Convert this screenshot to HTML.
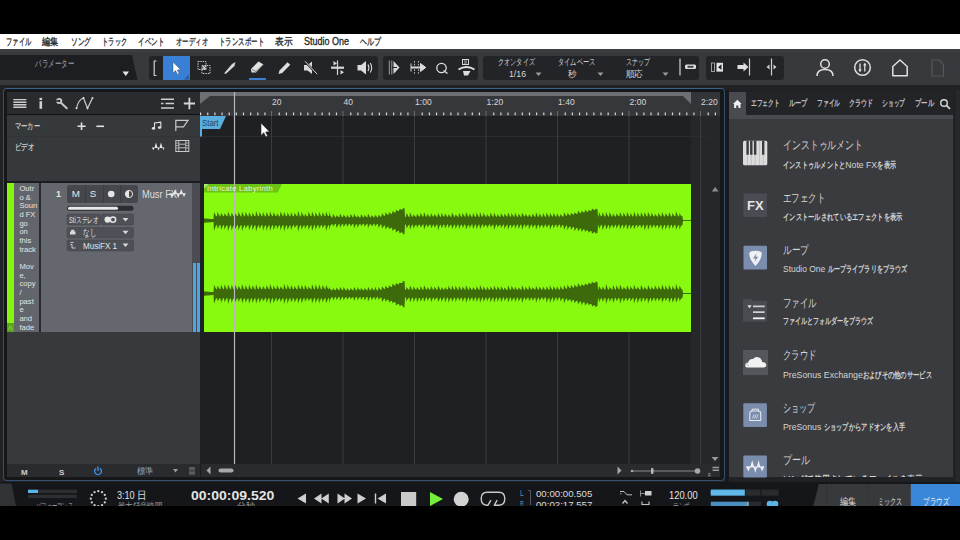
<!DOCTYPE html>
<html><head><meta charset="utf-8">
<style>
*{margin:0;padding:0;box-sizing:border-box}
html,body{width:960px;height:540px;overflow:hidden;background:#000}
body{position:relative;font-family:"Liberation Sans",sans-serif;color:#ccc}
.a{position:absolute}
.t{position:absolute;white-space:nowrap;line-height:1}
svg{position:absolute;overflow:visible}
.mn{font-size:10px;color:#262626;top:36.5px;-webkit-text-stroke:0.3px #262626}
.tb{background:#232428;border-radius:3px;top:56px;height:24px}
</style></head><body>
<!-- menu bar -->
<div class="a" style="left:0;top:34px;width:960px;height:15px;background:#fff"></div>
<div class="t mn"  style="transform:scaleX(0.625);transform-origin:0 0;left:6px">ファイル</div>
<div class="t mn"  style="transform:scaleX(0.825);transform-origin:0 0;left:42px">編集</div>
<div class="t mn"  style="transform:scaleX(0.667);transform-origin:0 0;left:71px">ソング</div>
<div class="t mn"  style="transform:scaleX(0.625);transform-origin:0 0;left:102px">トラック</div>
<div class="t mn"  style="transform:scaleX(0.650);transform-origin:0 0;left:138px">イベント</div>
<div class="t mn"  style="transform:scaleX(0.640);transform-origin:0 0;left:176px">オーディオ</div>
<div class="t mn"  style="transform:scaleX(0.643);transform-origin:0 0;left:219px">トランスポート</div>
<div class="t mn"  style="transform:scaleX(0.875);transform-origin:0 0;left:275px">表示</div>
<div class="t mn"  style="transform:scaleX(0.899);transform-origin:0 0;left:304px">Studio One</div>
<div class="t mn"  style="transform:scaleX(0.700);transform-origin:0 0;left:360px">ヘルプ</div>

<!-- toolbar -->
<div class="a" style="left:0;top:49px;width:960px;height:36px;background:#38393d"></div>
<div class="a" style="left:0;top:49px;width:960px;height:3px;background:#3d3e42"></div>
<!-- parameter box -->
<svg style="left:0;top:55px" width="140" height="26"><path d="M0,0 H132 L137.5,25 H0Z" fill="#1d1e22"/><path d="M122.5,16.5 H129 L125.75,21Z" fill="#e6e6e6"/></svg>
<div class="t"  style="transform:scaleX(0.650);transform-origin:0 0;left:35px;top:58.5px;font-size:9.5px;color:#a2a3a7">パラメーター</div>

<!-- tool group 1 -->
<div class="a tb" style="left:149px;width:228.5px"></div>
<div class="a" style="left:162.5px;top:56px;width:27px;height:24px;background:#3a7fd6"></div>
<svg style="left:0;top:0" width="960" height="90">
 <!-- [ -->
 <path d="M156.5,61 H154.2 V75.5 H156.5" fill="none" stroke="#cfcfcf" stroke-width="1.2"/>
 <!-- cursor -->
 <path d="M173,62 L173,73 L175.6,70.6 L177.6,74.4 L179.2,73.6 L177.3,69.9 L180.6,69.7Z" fill="#fff" stroke="#3a3a3a" stroke-width="0.4"/>
 <path d="M189,74.5 V79.5 H184Z" fill="#2a5da0"/>
 <!-- range tool -->
 <rect x="198" y="61.5" width="8" height="8" fill="none" stroke="#d0d0d0" stroke-width="1" stroke-dasharray="1.4 1"/>
 <rect x="202" y="65.5" width="8" height="8" fill="none" stroke="#d0d0d0" stroke-width="1" stroke-dasharray="1.4 1"/>
 <path d="M202.5,66 L206,69.5 M206,66 L202.5,69.5" stroke="#d0d0d0" stroke-width="1.2"/>
 <!-- knife/brush -->
 <path d="M224,73.5 L232,64 L235.5,62 L234.5,66 L226,73.8Z" fill="#d8d8d8"/>
 <!-- eraser -->
 <path d="M251,69 L258.5,61.5 L263.5,64.5 L256,72.5 L251.5,72.5Z" fill="#e2e2e2"/>
 <path d="M252,69.5 L256,71.5 L263,64.8" fill="none" stroke="#555" stroke-width="0.8"/>
 <rect x="249" y="78" width="17" height="2" fill="#3a7fd6"/>
 <!-- pencil -->
 <path d="M278.5,74 L279.5,70.5 L287.5,62.2 L290.3,64.8 L282.2,73Z" fill="#dedede"/>
 <!-- mute -->
 <path d="M304,65 H307.5 L312,61.5 V74 L307.5,70.5 H304Z" fill="#d8d8d8"/>
 <path d="M305,61.5 L317,74" stroke="#232428" stroke-width="2.2"/>
 <path d="M305,61.2 L317.2,74.2" stroke="#d8d8d8" stroke-width="1"/>
 <!-- split -->
 <path d="M337.5,60.5 V75" stroke="#d8d8d8" stroke-width="1.2"/>
 <path d="M331,67.7 H344" stroke="#d8d8d8" stroke-width="2.2"/>
 <path d="M333.5,61 L337,63.5 L333.5,65.5Z M340.5,70 L344,72.2 L340.5,74.5Z" fill="#d8d8d8"/>
 <!-- speaker -->
 <path d="M357.5,65 H361 L366,61 V74.5 L361,70.5 H357.5Z" fill="#dcdcdc"/>
 <path d="M368,64.5 Q369.8,67.7 368,71 M370.3,63 Q373,67.7 370.3,72.5" fill="none" stroke="#dcdcdc" stroke-width="1.1"/>
</svg>

<!-- tool group 2 -->
<div class="a tb" style="left:383px;width:94.5px"></div>
<svg style="left:0;top:0" width="960" height="90">
 <path d="M389.3,60.5 V74.5 M391.8,60.5 V74.5" stroke="#bdbdbd" stroke-width="0.8"/>
 <path d="M393.5,61 L399.5,67.5 L393.5,74Z" fill="#dadada"/>
 <path d="M392,67.5 H397" stroke="#232428" stroke-width="1"/>
 <path d="M411,67.5 H422" stroke="#dadada" stroke-width="2"/>
 <path d="M420.5,63.5 L425.8,67.5 L420.5,71.5Z M411,63.5 V71.5" fill="#dadada" stroke="#dadada" stroke-width="1"/>
 <path d="M414.5,61 V74.5 M418.5,61 V74.5" stroke="#bdbdbd" stroke-width="1" stroke-dasharray="1.5 1.3"/>
 <circle cx="441.5" cy="68" r="4.7" fill="none" stroke="#e0e0e0" stroke-width="1.3"/>
 <path d="M443.5,70.5 L447.5,73.5" stroke="#e0e0e0" stroke-width="1.3"/>
 <rect x="462.5" y="59.5" width="6" height="5" fill="none" stroke="#d8d8d8" stroke-width="1"/>
 <path d="M464,61 H467 M464,63 H467" stroke="#d8d8d8" stroke-width="0.8"/>
 <path d="M458.5,69.5 Q466.5,64.5 474.5,69.5" fill="none" stroke="#e2e2e2" stroke-width="1.8"/>
 <path d="M463,71 H470.5 L468,75.5 H464Z" fill="#dcdcdc"/>
</svg>

<!-- tool group 3 -->
<div class="a tb" style="left:483px;width:216px"></div>
<div class="t"  style="transform:scaleX(0.685);transform-origin:0 0;left:497.5px;top:57.5px;font-size:9px;color:#d0d0d0">クオンタイズ</div>
<div class="t"  style="transform:scaleX(0.970);transform-origin:0 0;left:508.5px;top:70px;font-size:9px;color:#d6d6d6">1/16</div>
<div class="t"  style="transform:scaleX(0.694);transform-origin:0 0;left:558px;top:57.5px;font-size:9px;color:#d0d0d0">タイムベース</div>
<div class="t"  style="transform:scaleX(0.944);transform-origin:0 0;left:567.5px;top:70px;font-size:9px;color:#d6d6d6">秒</div>
<div class="t"  style="transform:scaleX(0.667);transform-origin:0 0;left:626px;top:57.5px;font-size:9px;color:#d0d0d0">スナップ</div>
<div class="t"  style="transform:scaleX(0.944);transform-origin:0 0;left:626px;top:70px;font-size:9px;color:#d6d6d6">順応</div>
<svg style="left:0;top:0" width="960" height="90">
 <path d="M535.5,72.5 H541.5 L538.5,76Z M597.5,72.5 H603.5 L600.5,76Z M662.5,72.5 H668.5 L665.5,76Z" fill="#9a9a9e"/>
 <path d="M680,58.5 V75.5" stroke="#c8c8c8" stroke-width="1.3"/>
 <rect x="685" y="64.5" width="11" height="4.5" rx="1.5" fill="#e0e0e0"/>
 <rect x="687.5" y="65.8" width="6" height="2" fill="#444"/>
</svg>

<!-- tool group 4 -->
<div class="a tb" style="left:705.5px;width:78.5px"></div>
<svg style="left:0;top:0" width="960" height="90">
 <rect x="711.5" y="63" width="3" height="8.5" fill="none" stroke="#aaa" stroke-width="0.9"/>
 <rect x="716.5" y="62.8" width="6.5" height="8.8" fill="#e6e6e6"/>
 <path d="M721.5,64.3 L718,67.2 L721.5,70.1Z" fill="#232428"/>
 <path d="M737.5,65 H743.5 V62.5 L748.5,67 L743.5,71.5 V69 H737.5Z" fill="#dedede"/>
 <path d="M749.5,58.5 V75.5 M771.5,58.5 V75.5" stroke="#d0d0d0" stroke-width="1.2"/>
 <path d="M769.5,64.5 L766.5,67 L769.5,69.5Z M773.5,64.5 L776.5,67 L773.5,69.5Z" fill="#d0d0d0"/>
</svg>

<!-- right toolbar icons -->
<svg style="left:0;top:0" width="960" height="90">
 <circle cx="825" cy="64" r="4.3" fill="none" stroke="#e0e0e0" stroke-width="1.5"/>
 <path d="M817,76 Q817,69.5 825,69.5 Q833,69.5 833,76" fill="none" stroke="#e0e0e0" stroke-width="1.5"/>
 <circle cx="862.5" cy="67.5" r="7.8" fill="none" stroke="#e0e0e0" stroke-width="1.5"/>
 <path d="M860,63.5 V71.5 M864.8,63.5 V71.5" stroke="#e0e0e0" stroke-width="1.3"/>
 <path d="M858.2,69.5 L860,72 L861.8,69.5Z M863,65.5 L864.8,63 L866.6,65.5Z" fill="#e0e0e0"/>
 <path d="M892.8,75.7 V66.5 L900,60 L907.2,66.5 V75.7Z" fill="none" stroke="#e0e0e0" stroke-width="1.5" stroke-linejoin="round"/>
 <path d="M932,60 H939 L943.5,64.5 V76 H932Z" fill="none" stroke="#56575b" stroke-width="1.2"/>
</svg>

<!-- main background -->
<div class="a" style="left:0;top:85px;width:960px;height:397px;background:#212225"></div>

<!-- arrangement panel -->
<div class="a" style="left:3px;top:88px;width:722px;height:393px;border:1px solid #32506f;border-top-color:#3a628e;border-radius:4px;background:#161719"></div>
<!-- left header -->
<div class="a" style="left:7px;top:92px;width:193px;height:21.5px;background:#2a2b2f"></div>
<div class="a" style="left:7px;top:113.5px;width:193px;height:1.5px;background:#111214"></div>
<div class="a" style="left:7px;top:115px;width:193px;height:66px;background:#36393c"></div>
<div class="a" style="left:7px;top:136px;width:193px;height:1px;background:#313336"></div>
<div class="a" style="left:7px;top:181px;width:193px;height:2px;background:#1b1c1f"></div>
<svg style="left:0;top:0" width="200" height="200">
 <path d="M13.3,99.6 H26.4 M13.3,102.2 H26.4 M13.3,104.8 H26.4 M13.3,107.2 H26.4" stroke="#cfcfcf" stroke-width="1.4"/>
 <rect x="39.5" y="97.8" width="2.6" height="2.3" fill="#cfcfcf"/>
 <rect x="39.5" y="101.2" width="2.6" height="7.6" fill="#cfcfcf"/>
 <circle cx="59.2" cy="101" r="2.1" fill="none" stroke="#c6c6c6" stroke-width="1.9"/><rect x="55.5" y="100.2" width="3.6" height="1.6" fill="#2d2e32"/><path d="M61.2,103 L66.8,108.3" stroke="#c6c6c6" stroke-width="2" stroke-linecap="round"/>
 <path d="M76.5,108.5 Q78,100 83.5,98 L87.5,108.3 L92.5,98" fill="none" stroke="#cfcfcf" stroke-width="1.2"/>
 <circle cx="76.5" cy="108.3" r="1" fill="#e0e0e0"/><circle cx="83.5" cy="98" r="1" fill="#e0e0e0"/><circle cx="87.5" cy="108.3" r="1" fill="#e0e0e0"/><circle cx="92.5" cy="98" r="1" fill="#e0e0e0"/>
 <path d="M161,99.2 H174 M161,108 H174 M161,103.6 H163.5 M165.5,103.6 H174" stroke="#cfcfcf" stroke-width="1.5"/>
 <path d="M183.8,103.5 H195 M189.4,97.8 V109.2" stroke="#d6d6d6" stroke-width="1.8"/>
 <!-- marker row icons -->
 <path d="M77.5,126.2 H85.6 M81.55,122.4 V130" stroke="#e2e2e2" stroke-width="1.6"/>
 <path d="M96.4,126.3 H104" stroke="#e2e2e2" stroke-width="1.6"/>
 <path d="M154.5,128.3 V123 L160.8,122.2 V127.5" fill="none" stroke="#e0e0e0" stroke-width="1.1"/>
 <ellipse cx="153.5" cy="128.4" rx="1.7" ry="1.3" fill="#e0e0e0"/><ellipse cx="159.6" cy="127.6" rx="1.7" ry="1.3" fill="#e0e0e0"/>
 <path d="M175.8,131 V120.3 H188 L183.5,126.8 H175.8" fill="none" stroke="#c8c8c8" stroke-width="1.2"/>
 <path d="M151.8,147.5 L153.3,150.3 L154.8,147.5Z M154.4,148 L156,142.6 L157.6,148Z M157.2,147.5 L158.5,150.5 L159.8,147.5Z M159.4,148 L161,142.6 L162.6,148Z M162.2,147.5 L163.4,150 L164.5,147.5Z" fill="#e6e6e6"/>
 <rect x="175.8" y="140.5" width="13" height="11" fill="none" stroke="#c8c8c8" stroke-width="1"/>
 <path d="M178.8,140.5 V151.5 M185.8,140.5 V151.5 M178.8,144.2 H185.8 M178.8,147.8 H185.8" stroke="#c8c8c8" stroke-width="0.9"/>
 <path d="M175.8,143 H178.8 M175.8,145.5 H178.8 M175.8,148 H178.8 M185.8,143 H188.8 M185.8,145.5 H188.8 M185.8,148 H188.8" stroke="#c8c8c8" stroke-width="0.7"/>
</svg>
<div class="t"  style="transform:scaleX(0.694);transform-origin:0 0;left:14.5px;top:122px;font-size:9px;color:#d0d0d0;-webkit-text-stroke:0.2px #d0d0d0">マーカー</div>
<div class="t"  style="transform:scaleX(0.722);transform-origin:0 0;left:14.5px;top:143px;font-size:9px;color:#d0d0d0;-webkit-text-stroke:0.2px #d0d0d0">ビデオ</div>

<!-- timeline ruler -->
<div class="a" style="left:200px;top:92px;width:520px;height:24px;background:#36373b"></div>
<svg style="left:0;top:0" width="730" height="200">
 <path d="M200,92 H691 V104 L683,96 H210 L200,104Z" fill="#6e6f73"/>
 <path d="M691,92 H720 V116 H691Z" fill="#333438"/>
</svg>
<div class="a" style="left:200px;top:116px;width:520px;height:348px;background:#1f2023"></div>
<div class="a" style="left:691px;top:116px;width:29px;height:348px;background:#26272a"></div>
<div class="a" style="left:200px;top:136px;width:508px;height:1px;background:#2b2c2f"></div>

<svg style="left:0;top:0" width="730" height="480">
 <path d="M200.60,112.5V115.3M207.75,112.5V115.3M214.90,112.5V115.3M222.05,112.5V115.3M229.20,112.5V115.3M236.35,112.5V115.3M243.50,112.5V115.3M250.65,112.5V115.3M257.80,112.5V115.3M264.95,112.5V115.3M279.25,112.5V115.3M286.40,112.5V115.3M293.55,112.5V115.3M300.70,112.5V115.3M307.85,112.5V115.3M315.00,112.5V115.3M322.15,112.5V115.3M329.30,112.5V115.3M336.45,112.5V115.3M350.75,112.5V115.3M357.90,112.5V115.3M365.05,112.5V115.3M372.20,112.5V115.3M379.35,112.5V115.3M386.50,112.5V115.3M393.65,112.5V115.3M400.80,112.5V115.3M407.95,112.5V115.3M422.25,112.5V115.3M429.40,112.5V115.3M436.55,112.5V115.3M443.70,112.5V115.3M450.85,112.5V115.3M458.00,112.5V115.3M465.15,112.5V115.3M472.30,112.5V115.3M479.45,112.5V115.3M493.75,112.5V115.3M500.90,112.5V115.3M508.05,112.5V115.3M515.20,112.5V115.3M522.35,112.5V115.3M529.50,112.5V115.3M536.65,112.5V115.3M543.80,112.5V115.3M550.95,112.5V115.3M565.25,112.5V115.3M572.40,112.5V115.3M579.55,112.5V115.3M586.70,112.5V115.3M593.85,112.5V115.3M601.00,112.5V115.3M608.15,112.5V115.3M615.30,112.5V115.3M622.45,112.5V115.3M636.75,112.5V115.3M643.90,112.5V115.3M651.05,112.5V115.3M658.20,112.5V115.3M665.35,112.5V115.3M672.50,112.5V115.3M679.65,112.5V115.3M686.80,112.5V115.3M693.95,112.5V115.3M708.25,112.5V115.3M715.40,112.5V115.3" stroke="#d8d8d8" stroke-width="1.2"/>
 <path d="M271.5,111V116M343,111V116M414.5,111V116M486,111V116M557.5,111V116M629,111V116M700.5,111V116" stroke="#6a6b6f" stroke-width="1"/>
 <path d="M271.5,116V464M343,116V464M414.5,116V464M486,116V464M557.5,116V464M629,116V464M700.5,116V464" stroke="#3a3b3f" stroke-width="1"/>
</svg>
<div class="t" style="left:272.1px;top:97.5px;font-size:8.5px;color:#d8d8d8">20</div>
<div class="t" style="left:343.6px;top:97.5px;font-size:8.5px;color:#d8d8d8">40</div>
<div class="t" style="left:415.1px;top:97.5px;font-size:8.5px;color:#d8d8d8">1:00</div>
<div class="t" style="left:486.6px;top:97.5px;font-size:8.5px;color:#d8d8d8">1:20</div>
<div class="t" style="left:558.1px;top:97.5px;font-size:8.5px;color:#d8d8d8">1:40</div>
<div class="t" style="left:629.6px;top:97.5px;font-size:8.5px;color:#d8d8d8">2:00</div>
<div class="t" style="left:701.1px;top:97.5px;font-size:8.5px;color:#d8d8d8">2:20</div>
<!-- track row -->
<div class="a" style="left:7px;top:183px;width:7px;height:140px;background:#86f50f"></div>
<div class="a" style="left:7px;top:323px;width:7px;height:9px;background:#5aa61a"></div>
<svg style="left:0;top:0" width="20" height="340"><path d="M8.5,330 L10.3,326 L12.3,330" fill="none" stroke="#8ad84a" stroke-width="0.8"/></svg>
<div class="a" style="left:14px;top:183px;width:25px;height:149px;background:#62656b"></div>
<div class="a" style="left:39px;top:183px;width:2px;height:149px;background:#2a2b2e"></div>
<div class="a" style="left:41px;top:183px;width:151px;height:149px;background:#64676d"></div>
<div class="a" style="left:192px;top:183px;width:8px;height:149px;background:#4a4c51"></div>
<div class="a" style="left:193px;top:263px;width:2.5px;height:69px;background:#4aa6e4"></div>
<div class="a" style="left:197px;top:263px;width:2.5px;height:69px;background:#4aa6e4"></div>
<div class="a" style="left:7px;top:332px;width:193px;height:132px;background:#38393d"></div>
<div class="a" style="left:19.4px;top:185px;font-size:7.6px;line-height:8.66px;color:#e4e4e4;width:24px;white-space:pre">Outr
o &amp;
Soun
d FX
go
on
this
track

Mov
e,
copy
/
past
e
and
fade</div>
<div class="t" style="left:56px;top:190px;font-size:9px;color:#ece6d8;font-weight:bold">1</div>
<div class="a" style="left:67px;top:185px;width:70.5px;height:17.5px;background:#45474c;border-radius:2px"></div>
<div class="a" style="left:85px;top:185px;width:0.8px;height:17.5px;background:#3a3c41"></div>
<div class="a" style="left:102.5px;top:185px;width:0.8px;height:17.5px;background:#3a3c41"></div>
<div class="a" style="left:120px;top:185px;width:0.8px;height:17.5px;background:#3a3c41"></div>
<div class="t" style="left:71.7px;top:189.2px;font-size:9.8px;color:#e6e6e6">M</div>
<div class="t" style="left:89.7px;top:189.2px;font-size:9.8px;color:#e6e6e6">S</div>
<svg style="left:0;top:0" width="200" height="260">
 <circle cx="111.2" cy="194" r="3.3" fill="#e6e6e6"/>
 <circle cx="129" cy="194" r="3.6" fill="none" stroke="#e6e6e6" stroke-width="1"/>
 <path d="M129,190.4 A3.6,3.6 0 0 0 129,197.6Z" fill="#e6e6e6"/>
 
 <rect x="67" y="205.8" width="66.5" height="5" rx="2.5" fill="#2b2c30"/>
 <rect x="68" y="206.8" width="50" height="3" rx="1.5" fill="#e8e8e8"/>
 <rect x="67" y="214" width="33.5" height="11" rx="1.5" fill="#4d5056" stroke="#45474c" stroke-width="0.6"/>
 <rect x="101.5" y="214" width="32" height="11" rx="1.5" fill="#4d5056" stroke="#45474c" stroke-width="0.6"/>
 <circle cx="107.6" cy="219.6" r="3.1" fill="#e6e6e6"/>
 <circle cx="113" cy="219.6" r="2.7" fill="none" stroke="#e6e6e6" stroke-width="1.5"/>
 <path d="M122.5,218 H128.5 L125.5,221.5Z" fill="#d8d8d8"/>
 <rect x="67" y="227.5" width="66.5" height="10.5" rx="1.5" fill="#4d5056" stroke="#45474c" stroke-width="0.6"/>
 <path d="M122.5,230.8 H128.5 L125.5,234.3Z" fill="#d8d8d8"/>
 <path d="M70,234.5 H75.5 V231.5 H70Z M71.2,231.5 V229.8 H74.3 V231.5" fill="#d8d8d8"/>
 <rect x="67" y="240" width="66.5" height="11" rx="1.5" fill="#4d5056" stroke="#45474c" stroke-width="0.6"/>
 <path d="M122.5,243.5 H128.5 L125.5,247Z" fill="#d8d8d8"/>
 <path d="M70.5,242.5 H73.5 M70.5,244.5 H72 V248 H75.5" fill="none" stroke="#d8d8d8" stroke-width="0.9"/>
</svg>
<div class="t"  style="transform:scaleX(0.926);transform-origin:0 0;left:141.7px;top:189.5px;font-size:10px;color:#dedede">Musr FX</div>
<svg style="left:0;top:0" width="200" height="210"><path d="M169.5,193.8 H185.5" stroke="#e8e8e8" stroke-width="0.8"/><path d="M169.5,193.5 L171.8,197.5 L173.8,193.5Z M173.2,194 L175.2,189 L177.2,194Z M176.5,193.5 L178.2,198.3 L179.9,193.5Z M179.4,194 L181.3,189 L183.2,194Z M182.6,193.5 L184,197.3 L185.6,193.5Z" fill="#e8e8e8"/></svg>
<div class="t"  style="transform:scaleX(0.645);transform-origin:0 0;left:69px;top:215.5px;font-size:9px;color:#e2e2e2">Stiステレオ</div>
<div class="t"  style="transform:scaleX(0.650);transform-origin:0 0;left:83px;top:228px;font-size:9.5px;color:#e2e2e2">なし</div>
<div class="t"  style="transform:scaleX(0.847);transform-origin:0 0;left:83px;top:241px;font-size:9.5px;color:#e2e2e2">MusiFX 1</div>

<!-- clip -->
<div class="a" style="left:204px;top:184px;width:487px;height:148px;background:#88fa10"></div>
<svg style="left:0;top:0" width="720" height="340">
 <path d="M204,184 H282 L277.5,192.5 H204Z" fill="#69c414"/>
 <path d="M204,184 H208.5 L204,188.5Z" fill="#a9ee70"/>
 <path d="M204.0,218.4 L204.5,218.4 L205.0,218.5 L205.5,218.5 L206.0,218.6 L206.5,218.6 L207.0,218.6 L207.5,218.7 L208.0,218.7 L208.5,218.8 L209.0,218.8 L209.5,218.8 L210.0,218.9 L210.5,218.9 L211.0,218.9 L211.5,219.0 L212.0,219.0 L212.5,219.1 L213.0,219.1 L213.5,219.1 L214.0,211.9 L214.5,213.0 L215.0,214.0 L215.5,215.2 L216.0,215.8 L216.5,216.3 L217.0,216.0 L217.5,211.6 L218.0,212.8 L218.5,214.0 L219.0,214.8 L219.5,215.8 L220.0,216.6 L220.5,216.2 L221.0,212.7 L221.5,213.4 L222.0,214.6 L222.5,215.2 L223.0,215.8 L223.5,216.0 L224.0,216.4 L224.5,213.3 L225.0,213.7 L225.5,214.4 L226.0,215.3 L226.5,216.0 L227.0,216.1 L227.5,216.3 L228.0,211.5 L228.5,212.6 L229.0,214.0 L229.5,215.2 L230.0,216.0 L230.5,216.6 L231.0,216.5 L231.5,212.8 L232.0,213.4 L232.5,214.2 L233.0,215.3 L233.5,216.0 L234.0,216.0 L234.5,216.5 L235.0,212.8 L235.5,214.0 L236.0,214.6 L236.5,215.1 L237.0,216.0 L237.5,216.2 L238.0,216.1 L238.5,211.5 L239.0,212.9 L239.5,214.0 L240.0,215.0 L240.5,215.9 L241.0,216.6 L241.5,216.5 L242.0,211.6 L242.5,213.0 L243.0,214.0 L243.5,214.8 L244.0,215.9 L244.5,216.5 L245.0,216.4 L245.5,211.8 L246.0,212.7 L246.5,213.8 L247.0,214.9 L247.5,215.6 L248.0,216.4 L248.5,216.5 L249.0,212.3 L249.5,213.0 L250.0,214.0 L250.5,214.9 L251.0,216.1 L251.5,216.4 L252.0,216.6 L252.5,212.6 L253.0,213.4 L253.5,214.3 L254.0,215.5 L254.5,216.1 L255.0,216.2 L255.5,216.1 L256.0,211.2 L256.5,212.0 L257.0,213.4 L257.5,214.9 L258.0,215.9 L258.5,216.0 L259.0,216.4 L259.5,212.0 L260.0,212.7 L260.5,214.2 L261.0,214.7 L261.5,216.0 L262.0,216.5 L262.5,216.0 L263.0,212.2 L263.5,213.0 L264.0,214.4 L264.5,215.3 L265.0,216.0 L265.5,216.5 L266.0,216.4 L266.5,212.1 L267.0,213.1 L267.5,214.1 L268.0,215.1 L268.5,216.2 L269.0,216.5 L269.5,216.2 L270.0,211.3 L270.5,212.8 L271.0,213.9 L271.5,214.7 L272.0,215.8 L272.5,216.1 L273.0,216.2 L273.5,212.3 L274.0,213.3 L274.5,214.1 L275.0,214.9 L275.5,215.9 L276.0,216.1 L276.5,216.5 L277.0,213.5 L277.5,213.9 L278.0,214.9 L278.5,215.3 L279.0,215.8 L279.5,216.5 L280.0,216.4 L280.5,211.3 L281.0,212.4 L281.5,213.8 L282.0,214.7 L282.5,215.8 L283.0,216.6 L283.5,216.2 L284.0,211.4 L284.5,213.0 L285.0,214.2 L285.5,215.1 L286.0,215.9 L286.5,216.1 L287.0,216.5 L287.5,212.3 L288.0,213.0 L288.5,214.4 L289.0,215.0 L289.5,216.1 L290.0,216.6 L290.5,216.3 L291.0,212.3 L291.5,213.2 L292.0,214.4 L292.5,215.4 L293.0,216.0 L293.5,216.2 L294.0,216.3 L294.5,212.8 L295.0,213.4 L295.5,214.6 L296.0,215.0 L296.5,215.8 L297.0,216.3 L297.5,216.4 L298.0,211.0 L298.5,212.1 L299.0,213.6 L299.5,215.0 L300.0,216.0 L300.5,216.4 L301.0,216.5 L301.5,211.5 L302.0,212.8 L302.5,214.0 L303.0,215.0 L303.5,215.6 L304.0,216.5 L304.5,216.4 L305.0,213.4 L305.5,214.3 L306.0,215.1 L306.5,215.7 L307.0,216.3 L307.5,216.4 L308.0,216.3 L308.5,211.6 L309.0,212.9 L309.5,213.7 L310.0,214.8 L310.5,216.1 L311.0,216.1 L311.5,216.2 L312.0,211.5 L312.5,212.6 L313.0,213.8 L313.5,214.8 L314.0,216.0 L314.5,216.5 L315.0,216.5 L315.5,212.1 L316.0,213.2 L316.5,214.0 L317.0,215.1 L317.5,215.8 L318.0,216.2 L318.5,216.6 L319.0,211.6 L319.5,212.9 L320.0,214.0 L320.5,214.8 L321.0,215.8 L321.5,216.5 L322.0,216.2 L322.5,212.4 L323.0,213.1 L323.5,214.1 L324.0,215.1 L324.5,215.9 L325.0,216.1 L325.5,216.0 L326.0,211.5 L326.5,212.9 L327.0,214.1 L327.5,215.1 L328.0,216.1 L328.5,216.1 L329.0,216.1 L329.5,211.5 L330.0,214.6 L330.5,215.8 L331.0,216.3 L331.5,217.2 L332.0,217.5 L332.5,217.7 L333.0,213.6 L333.5,214.5 L334.0,215.6 L334.5,216.1 L335.0,217.1 L335.5,217.5 L336.0,217.6 L336.5,214.9 L337.0,215.4 L337.5,216.1 L338.0,216.4 L338.5,217.1 L339.0,217.1 L339.5,217.3 L340.0,213.2 L340.5,214.5 L341.0,215.1 L341.5,216.2 L342.0,217.1 L342.5,217.1 L343.0,217.3 L343.5,214.5 L344.0,215.2 L344.5,215.8 L345.0,216.3 L345.5,217.1 L346.0,217.6 L346.5,217.5 L347.0,214.8 L347.5,215.3 L348.0,216.1 L348.5,216.7 L349.0,217.4 L349.5,217.1 L350.0,217.4 L350.5,213.9 L351.0,214.7 L351.5,215.3 L352.0,216.1 L352.5,217.3 L353.0,217.2 L353.5,217.3 L354.0,213.4 L354.5,214.3 L355.0,215.7 L355.5,216.3 L356.0,216.8 L356.5,217.3 L357.0,217.4 L357.5,215.3 L358.0,215.6 L358.5,216.5 L359.0,216.7 L359.5,217.4 L360.0,217.4 L360.5,217.5 L361.0,214.3 L361.5,214.7 L362.0,215.5 L362.5,216.6 L363.0,216.8 L363.5,217.5 L364.0,217.4 L364.5,214.4 L365.0,215.4 L365.5,216.0 L366.0,216.4 L366.5,216.9 L367.0,217.4 L367.5,217.1 L368.0,213.4 L368.5,214.4 L369.0,215.3 L369.5,216.3 L370.0,216.9 L370.5,217.6 L371.0,217.6 L371.5,215.2 L372.0,215.4 L372.5,216.0 L373.0,216.4 L373.5,217.3 L374.0,217.2 L374.5,217.3 L375.0,214.8 L375.5,215.4 L376.0,215.7 L376.5,216.3 L377.0,217.2 L377.5,217.2 L378.0,217.6 L378.5,214.7 L379.0,214.9 L379.5,215.8 L380.0,216.1 L380.5,216.9 L381.0,216.6 L381.5,216.5 L382.0,212.7 L382.5,213.9 L383.0,214.6 L383.5,215.5 L384.0,215.5 L384.5,215.7 L385.0,216.0 L385.5,212.2 L386.0,213.0 L386.5,213.4 L387.0,214.1 L387.5,214.6 L388.0,214.9 L388.5,215.0 L389.0,211.8 L389.5,212.4 L390.0,213.1 L390.5,213.5 L391.0,213.6 L391.5,214.0 L392.0,214.0 L392.5,210.9 L393.0,211.3 L393.5,211.7 L394.0,212.2 L394.5,212.4 L395.0,212.6 L395.5,212.4 L396.0,209.8 L396.5,210.1 L397.0,210.6 L397.5,211.0 L398.0,211.1 L398.5,211.0 L399.0,211.1 L399.5,208.9 L400.0,209.2 L400.5,209.1 L401.0,209.4 L401.5,209.6 L402.0,210.0 L402.5,209.3 L403.0,207.9 L403.5,208.2 L404.0,208.3 L404.5,208.2 L405.0,216.7 L405.5,216.7 L406.0,216.9 L406.5,212.8 L407.0,213.7 L407.5,214.6 L408.0,215.8 L408.5,216.4 L409.0,216.9 L409.5,216.9 L410.0,212.1 L410.5,213.5 L411.0,214.4 L411.5,215.8 L412.0,216.4 L412.5,216.8 L413.0,216.8 L413.5,214.1 L414.0,215.1 L414.5,215.5 L415.0,216.2 L415.5,216.5 L416.0,217.0 L416.5,216.6 L417.0,213.6 L417.5,214.6 L418.0,215.0 L418.5,215.7 L419.0,216.3 L419.5,216.6 L420.0,216.8 L420.5,212.7 L421.0,213.6 L421.5,214.8 L422.0,215.4 L422.5,216.6 L423.0,216.6 L423.5,216.6 L424.0,212.0 L424.5,213.3 L425.0,214.4 L425.5,215.4 L426.0,216.6 L426.5,216.8 L427.0,216.6 L427.5,213.3 L428.0,214.4 L428.5,215.2 L429.0,215.8 L429.5,216.4 L430.0,216.7 L430.5,216.8 L431.0,212.9 L431.5,213.9 L432.0,214.8 L432.5,215.9 L433.0,216.4 L433.5,216.6 L434.0,216.6 L434.5,213.9 L435.0,214.5 L435.5,215.2 L436.0,216.0 L436.5,216.7 L437.0,216.8 L437.5,217.1 L438.0,212.4 L438.5,213.8 L439.0,214.8 L439.5,215.5 L440.0,216.2 L440.5,216.7 L441.0,217.0 L441.5,212.8 L442.0,213.6 L442.5,214.9 L443.0,215.7 L443.5,216.3 L444.0,216.6 L444.5,216.7 L445.0,213.1 L445.5,214.2 L446.0,214.8 L446.5,215.7 L447.0,216.6 L447.5,216.7 L448.0,217.1 L448.5,214.2 L449.0,214.7 L449.5,215.3 L450.0,216.2 L450.5,216.7 L451.0,217.0 L451.5,216.6 L452.0,212.6 L452.5,213.4 L453.0,214.4 L453.5,215.2 L454.0,216.5 L454.5,217.0 L455.0,216.8 L455.5,214.4 L456.0,214.5 L456.5,215.6 L457.0,216.0 L457.5,216.4 L458.0,216.9 L458.5,217.0 L459.0,212.9 L459.5,213.5 L460.0,214.5 L460.5,215.7 L461.0,216.5 L461.5,216.9 L462.0,216.7 L462.5,212.7 L463.0,213.6 L463.5,214.9 L464.0,215.4 L464.5,216.2 L465.0,216.9 L465.5,216.7 L466.0,211.7 L466.5,213.3 L467.0,214.2 L467.5,215.3 L468.0,216.3 L468.5,216.7 L469.0,216.8 L469.5,213.2 L470.0,214.2 L470.5,215.1 L471.0,215.9 L471.5,216.5 L472.0,217.1 L472.5,216.7 L473.0,213.0 L473.5,213.9 L474.0,214.6 L474.5,215.9 L475.0,216.2 L475.5,217.0 L476.0,217.0 L476.5,212.4 L477.0,213.5 L477.5,214.8 L478.0,215.4 L478.5,216.5 L479.0,217.1 L479.5,216.9 L480.0,212.0 L480.5,213.2 L481.0,214.8 L481.5,215.5 L482.0,216.4 L482.5,216.8 L483.0,216.6 L483.5,212.8 L484.0,213.5 L484.5,214.9 L485.0,215.6 L485.5,216.6 L486.0,216.9 L486.5,216.9 L487.0,213.5 L487.5,214.7 L488.0,215.4 L488.5,215.8 L489.0,216.4 L489.5,216.8 L490.0,216.6 L490.5,212.6 L491.0,213.3 L491.5,214.6 L492.0,215.7 L492.5,216.3 L493.0,216.6 L493.5,216.9 L494.0,212.4 L494.5,213.8 L495.0,214.5 L495.5,215.8 L496.0,216.2 L496.5,217.0 L497.0,216.7 L497.5,214.1 L498.0,214.6 L498.5,215.4 L499.0,215.7 L499.5,216.7 L500.0,217.0 L500.5,216.5 L501.0,212.9 L501.5,214.0 L502.0,214.8 L502.5,215.7 L503.0,216.3 L503.5,216.7 L504.0,217.0 L504.5,213.2 L505.0,214.2 L505.5,215.1 L506.0,215.7 L506.5,216.3 L507.0,216.6 L507.5,216.7 L508.0,212.6 L508.5,213.3 L509.0,214.5 L509.5,215.5 L510.0,216.3 L510.5,216.7 L511.0,217.0 L511.5,212.6 L512.0,213.9 L512.5,214.9 L513.0,215.3 L513.5,216.6 L514.0,216.8 L514.5,216.8 L515.0,212.6 L515.5,213.8 L516.0,214.7 L516.5,215.8 L517.0,216.5 L517.5,216.9 L518.0,217.1 L518.5,213.4 L519.0,214.4 L519.5,214.8 L520.0,216.0 L520.5,216.5 L521.0,217.0 L521.5,216.6 L522.0,212.4 L522.5,213.4 L523.0,214.3 L523.5,215.5 L524.0,216.3 L524.5,216.6 L525.0,216.6 L525.5,213.5 L526.0,214.6 L526.5,215.2 L527.0,215.9 L527.5,216.5 L528.0,216.7 L528.5,216.5 L529.0,213.9 L529.5,215.0 L530.0,215.3 L530.5,216.3 L531.0,216.4 L531.5,217.0 L532.0,216.9 L532.5,213.3 L533.0,214.5 L533.5,215.1 L534.0,215.7 L534.5,216.3 L535.0,217.0 L535.5,216.8 L536.0,212.2 L536.5,213.5 L537.0,214.5 L537.5,215.5 L538.0,216.4 L538.5,216.8 L539.0,217.1 L539.5,213.2 L540.0,214.2 L540.5,214.7 L541.0,215.7 L541.5,216.7 L542.0,216.7 L542.5,216.9 L543.0,213.0 L543.5,214.0 L544.0,215.0 L544.5,215.8 L545.0,216.4 L545.5,217.0 L546.0,216.8 L546.5,212.3 L547.0,213.6 L547.5,214.6 L548.0,215.5 L548.5,216.5 L549.0,216.9 L549.5,216.7 L550.0,212.4 L550.5,213.9 L551.0,215.0 L551.5,215.3 L552.0,216.3 L552.5,216.6 L553.0,216.7 L553.5,212.7 L554.0,213.7 L554.5,214.6 L555.0,215.8 L555.5,216.2 L556.0,216.7 L556.5,216.6 L557.0,213.2 L557.5,214.1 L558.0,214.8 L558.5,216.0 L559.0,216.7 L559.5,216.6 L560.0,216.6 L560.5,214.1 L561.0,214.5 L561.5,215.4 L562.0,215.7 L562.5,216.4 L563.0,216.7 L563.5,216.5 L564.0,212.5 L564.5,213.1 L565.0,214.0 L565.5,215.2 L566.0,215.5 L566.5,215.8 L567.0,215.7 L567.5,212.7 L568.0,213.2 L568.5,214.3 L569.0,214.4 L569.5,215.2 L570.0,215.5 L570.5,215.3 L571.0,212.4 L571.5,213.2 L572.0,213.7 L572.5,214.0 L573.0,214.6 L573.5,214.5 L574.0,214.6 L574.5,212.3 L575.0,213.0 L575.5,213.0 L576.0,213.6 L576.5,214.0 L577.0,214.1 L577.5,213.9 L578.0,210.5 L578.5,211.1 L579.0,211.7 L579.5,212.8 L580.0,213.0 L580.5,213.3 L581.0,213.1 L581.5,210.5 L582.0,211.0 L582.5,211.8 L583.0,211.8 L583.5,212.4 L584.0,212.6 L584.5,212.6 L585.0,210.0 L585.5,210.2 L586.0,210.8 L586.5,211.1 L587.0,211.7 L587.5,212.0 L588.0,211.9 L588.5,209.8 L589.0,210.3 L589.5,210.1 L590.0,210.9 L590.5,210.8 L591.0,210.9 L591.5,210.8 L592.0,208.5 L592.5,209.1 L593.0,209.3 L593.5,209.5 L594.0,209.8 L594.5,210.2 L595.0,210.1 L595.5,208.7 L596.0,208.9 L596.5,208.8 L597.0,209.0 L597.5,209.4 L598.0,216.6 L598.5,216.4 L599.0,212.3 L599.5,213.1 L600.0,214.5 L600.5,215.4 L601.0,215.9 L601.5,216.3 L602.0,216.3 L602.5,212.6 L603.0,213.2 L603.5,214.3 L604.0,215.2 L604.5,216.3 L605.0,216.6 L605.5,216.5 L606.0,211.7 L606.5,212.9 L607.0,214.4 L607.5,215.3 L608.0,215.8 L608.5,216.7 L609.0,216.7 L609.5,211.9 L610.0,212.9 L610.5,214.1 L611.0,215.3 L611.5,215.9 L612.0,216.7 L612.5,216.6 L613.0,213.2 L613.5,214.4 L614.0,215.0 L614.5,215.8 L615.0,216.5 L615.5,216.4 L616.0,216.5 L616.5,213.3 L617.0,213.7 L617.5,215.0 L618.0,215.3 L618.5,216.1 L619.0,216.2 L619.5,216.3 L620.0,211.8 L620.5,213.3 L621.0,213.9 L621.5,215.1 L622.0,216.3 L622.5,216.4 L623.0,216.7 L623.5,212.5 L624.0,213.4 L624.5,214.2 L625.0,215.5 L625.5,216.0 L626.0,216.4 L626.5,216.3 L627.0,211.9 L627.5,212.8 L628.0,213.9 L628.5,215.3 L629.0,216.1 L629.5,216.6 L630.0,216.8 L630.5,213.0 L631.0,213.5 L631.5,214.7 L632.0,215.5 L632.5,216.4 L633.0,216.3 L633.5,216.5 L634.0,211.2 L634.5,212.9 L635.0,214.1 L635.5,215.3 L636.0,215.9 L636.5,216.8 L637.0,216.5 L637.5,212.0 L638.0,213.5 L638.5,214.3 L639.0,215.4 L639.5,216.1 L640.0,216.5 L640.5,216.7 L641.0,211.9 L641.5,213.3 L642.0,214.1 L642.5,215.3 L643.0,215.9 L643.5,216.7 L644.0,216.5 L644.5,211.8 L645.0,213.4 L645.5,213.9 L646.0,215.3 L646.5,216.0 L647.0,216.5 L647.5,216.5 L648.0,211.8 L648.5,212.9 L649.0,214.1 L649.5,215.0 L650.0,216.0 L650.5,216.4 L651.0,216.5 L651.5,212.4 L652.0,213.2 L652.5,214.5 L653.0,215.5 L653.5,215.9 L654.0,216.6 L654.5,216.5 L655.0,213.6 L655.5,214.4 L656.0,215.2 L656.5,215.4 L657.0,216.2 L657.5,216.7 L658.0,216.5 L658.5,212.5 L659.0,213.6 L659.5,214.5 L660.0,215.6 L660.5,215.9 L661.0,216.5 L661.5,216.6 L662.0,212.0 L662.5,212.8 L663.0,214.3 L663.5,215.2 L664.0,216.3 L664.5,216.2 L665.0,216.7 L665.5,212.9 L666.0,213.7 L666.5,214.6 L667.0,215.3 L667.5,216.0 L668.0,216.3 L668.5,216.3 L669.0,212.1 L669.5,213.1 L670.0,214.1 L670.5,215.2 L671.0,216.1 L671.5,216.4 L672.0,216.6 L672.5,212.7 L673.0,213.8 L673.5,214.8 L674.0,215.7 L674.5,216.1 L675.0,216.3 L675.5,216.3 L676.0,211.1 L676.5,212.7 L677.0,213.7 L677.5,214.7 L678.0,216.0 L678.5,216.5 L679.0,216.4 L679.5,213.1 L680.0,213.8 L680.5,214.9 L681.0,215.5 L681.5,216.1 L682.0,216.2 L682.5,216.5 L683.0,219.9 L683.5,219.9 L684.0,219.9 L684.5,219.9 L685.0,219.9 L685.5,219.9 L686.0,219.9 L686.5,219.9 L687.0,219.9 L687.5,219.9 L688.0,219.9 L688.5,219.9 L689.0,219.9 L689.5,219.9 L690.0,219.9 L690.5,219.9 L691.0,219.9 L691.0,221.1 L690.5,221.1 L690.0,221.1 L689.5,221.1 L689.0,221.1 L688.5,221.1 L688.0,221.1 L687.5,221.1 L687.0,221.1 L686.5,221.1 L686.0,221.1 L685.5,221.1 L685.0,221.1 L684.5,221.1 L684.0,221.1 L683.5,221.1 L683.0,221.1 L682.5,225.0 L682.0,224.9 L681.5,225.6 L681.0,226.3 L680.5,227.1 L680.0,228.3 L679.5,229.7 L679.0,224.8 L678.5,224.9 L678.0,225.7 L677.5,226.6 L677.0,227.5 L676.5,228.5 L676.0,230.3 L675.5,225.1 L675.0,224.8 L674.5,225.0 L674.0,226.1 L673.5,226.7 L673.0,227.7 L672.5,229.0 L672.0,224.9 L671.5,224.8 L671.0,225.3 L670.5,226.1 L670.0,227.4 L669.5,228.2 L669.0,229.7 L668.5,224.6 L668.0,224.7 L667.5,225.5 L667.0,226.3 L666.5,227.5 L666.0,228.4 L665.5,229.8 L665.0,224.8 L664.5,225.1 L664.0,225.3 L663.5,226.7 L663.0,227.8 L662.5,229.2 L662.0,230.4 L661.5,225.2 L661.0,224.9 L660.5,225.2 L660.0,226.0 L659.5,227.1 L659.0,228.1 L658.5,228.9 L658.0,224.9 L657.5,225.0 L657.0,225.3 L656.5,226.0 L656.0,226.7 L655.5,227.3 L655.0,228.2 L654.5,224.7 L654.0,224.9 L653.5,225.3 L653.0,226.0 L652.5,226.9 L652.0,227.5 L651.5,228.5 L651.0,225.2 L650.5,224.8 L650.0,225.3 L649.5,226.1 L649.0,227.7 L648.5,228.8 L648.0,230.1 L647.5,224.9 L647.0,224.6 L646.5,225.3 L646.0,226.4 L645.5,227.9 L645.0,228.9 L644.5,230.4 L644.0,225.2 L643.5,224.8 L643.0,225.1 L642.5,226.2 L642.0,226.7 L641.5,227.4 L641.0,228.6 L640.5,225.0 L640.0,225.1 L639.5,225.0 L639.0,225.6 L638.5,226.6 L638.0,227.1 L637.5,228.3 L637.0,224.9 L636.5,225.0 L636.0,225.2 L635.5,226.1 L635.0,227.6 L634.5,228.3 L634.0,229.6 L633.5,224.9 L633.0,224.9 L632.5,225.6 L632.0,226.3 L631.5,227.2 L631.0,228.4 L630.5,229.3 L630.0,224.9 L629.5,225.0 L629.0,225.2 L628.5,226.6 L628.0,227.4 L627.5,228.8 L627.0,229.8 L626.5,224.8 L626.0,224.6 L625.5,225.3 L625.0,225.9 L624.5,227.1 L624.0,228.2 L623.5,229.0 L623.0,224.7 L622.5,224.7 L622.0,225.6 L621.5,226.1 L621.0,227.2 L620.5,228.5 L620.0,229.8 L619.5,224.8 L619.0,224.6 L618.5,225.1 L618.0,225.7 L617.5,226.6 L617.0,227.8 L616.5,228.8 L616.0,224.8 L615.5,224.7 L615.0,225.5 L614.5,226.3 L614.0,227.1 L613.5,227.7 L613.0,228.5 L612.5,224.9 L612.0,225.1 L611.5,225.4 L611.0,226.0 L610.5,227.0 L610.0,228.3 L609.5,229.4 L609.0,225.2 L608.5,224.9 L608.0,225.6 L607.5,226.7 L607.0,227.8 L606.5,228.5 L606.0,229.6 L605.5,224.7 L605.0,224.7 L604.5,225.3 L604.0,226.7 L603.5,227.6 L603.0,229.3 L602.5,230.1 L602.0,225.0 L601.5,224.6 L601.0,225.6 L600.5,226.0 L600.0,226.7 L599.5,228.2 L599.0,228.7 L598.5,225.2 L598.0,225.0 L597.5,233.3 L597.0,233.0 L596.5,232.9 L596.0,233.6 L595.5,233.7 L595.0,232.0 L594.5,231.8 L594.0,232.4 L593.5,232.7 L593.0,232.9 L592.5,233.3 L592.0,234.0 L591.5,230.9 L591.0,230.9 L590.5,230.9 L590.0,231.5 L589.5,231.7 L589.0,231.9 L588.5,232.7 L588.0,230.4 L587.5,229.9 L587.0,230.2 L586.5,230.5 L586.0,231.2 L585.5,231.2 L585.0,232.1 L584.5,229.5 L584.0,229.0 L583.5,229.5 L583.0,229.7 L582.5,230.7 L582.0,231.4 L581.5,231.7 L581.0,228.7 L580.5,228.2 L580.0,228.8 L579.5,229.4 L579.0,230.1 L578.5,230.7 L578.0,231.3 L577.5,228.0 L577.0,227.7 L576.5,228.1 L576.0,228.4 L575.5,229.5 L575.0,230.2 L574.5,231.3 L574.0,226.8 L573.5,227.1 L573.0,227.3 L572.5,227.6 L572.0,228.4 L571.5,229.3 L571.0,230.0 L570.5,226.0 L570.0,226.4 L569.5,226.7 L569.0,227.0 L568.5,228.3 L568.0,228.8 L567.5,230.5 L567.0,225.8 L566.5,225.3 L566.0,226.2 L565.5,227.1 L565.0,227.8 L564.5,229.0 L564.0,230.1 L563.5,225.4 L563.0,225.1 L562.5,225.0 L562.0,225.7 L561.5,226.4 L561.0,227.5 L560.5,228.6 L560.0,224.6 L559.5,224.6 L559.0,224.7 L558.5,225.6 L558.0,226.6 L557.5,227.1 L557.0,228.0 L556.5,224.8 L556.0,224.5 L555.5,225.3 L555.0,225.5 L554.5,226.5 L554.0,227.7 L553.5,228.6 L553.0,224.7 L552.5,224.7 L552.0,225.3 L551.5,226.2 L551.0,227.1 L550.5,228.5 L550.0,230.0 L549.5,224.8 L549.0,224.7 L548.5,224.8 L548.0,225.8 L547.5,226.7 L547.0,227.1 L546.5,228.0 L546.0,224.6 L545.5,224.6 L545.0,225.2 L544.5,225.7 L544.0,226.8 L543.5,227.6 L543.0,228.2 L542.5,224.9 L542.0,224.9 L541.5,225.1 L541.0,225.9 L540.5,226.4 L540.0,227.6 L539.5,228.9 L539.0,224.8 L538.5,224.8 L538.0,225.1 L537.5,226.0 L537.0,227.1 L536.5,228.5 L536.0,230.0 L535.5,224.8 L535.0,224.7 L534.5,225.1 L534.0,225.8 L533.5,226.4 L533.0,227.2 L532.5,228.0 L532.0,224.8 L531.5,224.4 L531.0,224.9 L530.5,226.3 L530.0,226.7 L529.5,228.3 L529.0,229.5 L528.5,224.8 L528.0,224.5 L527.5,225.0 L527.0,225.6 L526.5,226.2 L526.0,227.3 L525.5,227.8 L525.0,224.5 L524.5,224.5 L524.0,224.9 L523.5,226.0 L523.0,227.4 L522.5,228.6 L522.0,230.1 L521.5,224.7 L521.0,224.8 L520.5,224.8 L520.0,226.1 L519.5,226.9 L519.0,228.1 L518.5,228.9 L518.0,224.6 L517.5,224.5 L517.0,224.7 L516.5,226.1 L516.0,226.8 L515.5,227.7 L515.0,228.9 L514.5,224.7 L514.0,224.7 L513.5,225.0 L513.0,225.7 L512.5,226.7 L512.0,227.4 L511.5,228.6 L511.0,224.7 L510.5,224.9 L510.0,225.1 L509.5,226.1 L509.0,227.1 L508.5,228.7 L508.0,229.8 L507.5,224.6 L507.0,224.7 L506.5,225.2 L506.0,226.2 L505.5,226.7 L505.0,228.1 L504.5,229.1 L504.0,224.7 L503.5,224.6 L503.0,225.0 L502.5,225.9 L502.0,226.3 L501.5,227.3 L501.0,228.5 L500.5,224.8 L500.0,224.5 L499.5,225.2 L499.0,225.7 L498.5,226.0 L498.0,226.8 L497.5,227.7 L497.0,224.8 L496.5,224.5 L496.0,225.0 L495.5,226.2 L495.0,227.5 L494.5,228.7 L494.0,230.2 L493.5,224.5 L493.0,224.7 L492.5,225.0 L492.0,225.4 L491.5,226.3 L491.0,226.8 L490.5,227.3 L490.0,224.3 L489.5,224.5 L489.0,224.8 L488.5,225.7 L488.0,226.5 L487.5,227.2 L487.0,227.9 L486.5,224.9 L486.0,224.8 L485.5,224.9 L485.0,225.7 L484.5,226.2 L484.0,227.3 L483.5,227.6 L483.0,224.3 L482.5,224.4 L482.0,225.2 L481.5,226.2 L481.0,227.0 L480.5,228.3 L480.0,229.5 L479.5,224.7 L479.0,224.4 L478.5,225.0 L478.0,225.8 L477.5,226.7 L477.0,228.0 L476.5,229.5 L476.0,224.3 L475.5,224.4 L475.0,225.3 L474.5,226.1 L474.0,227.1 L473.5,228.2 L473.0,229.2 L472.5,224.7 L472.0,224.3 L471.5,224.7 L471.0,225.9 L470.5,226.1 L470.0,227.5 L469.5,228.2 L469.0,224.7 L468.5,224.8 L468.0,225.3 L467.5,226.3 L467.0,227.2 L466.5,228.5 L466.0,229.4 L465.5,224.9 L465.0,224.4 L464.5,224.6 L464.0,225.4 L463.5,226.4 L463.0,227.2 L462.5,228.0 L462.0,224.8 L461.5,224.8 L461.0,224.7 L460.5,225.6 L460.0,226.8 L459.5,227.9 L459.0,229.3 L458.5,224.8 L458.0,224.5 L457.5,224.8 L457.0,226.0 L456.5,227.0 L456.0,227.8 L455.5,229.2 L455.0,224.4 L454.5,224.6 L454.0,225.3 L453.5,226.2 L453.0,227.0 L452.5,228.1 L452.0,229.5 L451.5,224.8 L451.0,224.7 L450.5,224.7 L450.0,225.9 L449.5,226.4 L449.0,227.1 L448.5,228.3 L448.0,224.5 L447.5,224.3 L447.0,224.8 L446.5,226.1 L446.0,226.8 L445.5,227.6 L445.0,228.6 L444.5,224.9 L444.0,224.4 L443.5,224.7 L443.0,225.5 L442.5,226.7 L442.0,227.4 L441.5,228.2 L441.0,224.9 L440.5,224.8 L440.0,225.2 L439.5,226.1 L439.0,227.5 L438.5,229.0 L438.0,230.4 L437.5,224.4 L437.0,224.5 L436.5,224.8 L436.0,225.9 L435.5,226.2 L435.0,227.2 L434.5,228.0 L434.0,224.9 L433.5,224.4 L433.0,225.2 L432.5,226.0 L432.0,226.7 L431.5,227.7 L431.0,228.1 L430.5,224.3 L430.0,224.8 L429.5,224.7 L429.0,225.3 L428.5,226.2 L428.0,227.0 L427.5,227.6 L427.0,224.8 L426.5,224.4 L426.0,225.2 L425.5,226.1 L425.0,227.3 L424.5,228.5 L424.0,229.6 L423.5,224.4 L423.0,224.3 L422.5,225.0 L422.0,225.8 L421.5,226.1 L421.0,227.0 L420.5,227.8 L420.0,224.8 L419.5,224.4 L419.0,224.7 L418.5,225.6 L418.0,226.1 L417.5,226.7 L417.0,228.0 L416.5,224.9 L416.0,224.6 L415.5,225.3 L415.0,225.7 L414.5,226.7 L414.0,227.7 L413.5,228.9 L413.0,224.4 L412.5,224.8 L412.0,225.3 L411.5,226.3 L411.0,227.0 L410.5,228.2 L410.0,229.9 L409.5,224.6 L409.0,224.9 L408.5,224.9 L408.0,225.9 L407.5,226.4 L407.0,227.7 L406.5,228.4 L406.0,224.4 L405.5,224.4 L405.0,224.9 L404.5,233.8 L404.0,234.2 L403.5,234.2 L403.0,234.5 L402.5,232.3 L402.0,232.5 L401.5,232.2 L401.0,232.4 L400.5,232.9 L400.0,233.0 L399.5,233.6 L399.0,231.1 L398.5,230.4 L398.0,230.8 L397.5,230.9 L397.0,231.8 L396.5,231.9 L396.0,232.8 L395.5,229.2 L395.0,229.1 L394.5,229.1 L394.0,229.2 L393.5,230.1 L393.0,230.4 L392.5,230.8 L392.0,228.0 L391.5,227.5 L391.0,228.1 L390.5,228.4 L390.0,228.4 L389.5,228.5 L389.0,229.3 L388.5,226.7 L388.0,226.5 L387.5,227.0 L387.0,227.5 L386.5,227.9 L386.0,228.8 L385.5,229.5 L385.0,225.6 L384.5,225.2 L384.0,225.8 L383.5,226.5 L383.0,226.9 L382.5,228.0 L382.0,228.8 L381.5,225.0 L381.0,224.4 L380.5,224.6 L380.0,225.2 L379.5,226.5 L379.0,226.9 L378.5,228.0 L378.0,223.9 L377.5,223.9 L377.0,224.4 L376.5,224.6 L376.0,225.2 L375.5,226.1 L375.0,226.6 L374.5,223.9 L374.0,223.6 L373.5,224.5 L373.0,224.6 L372.5,225.5 L372.0,226.0 L371.5,226.3 L371.0,224.2 L370.5,223.9 L370.0,224.6 L369.5,225.1 L369.0,225.8 L368.5,227.2 L368.0,228.1 L367.5,223.8 L367.0,223.8 L366.5,224.4 L366.0,224.6 L365.5,225.4 L365.0,225.8 L364.5,227.1 L364.0,224.0 L363.5,223.6 L363.0,224.3 L362.5,224.5 L362.0,225.1 L361.5,225.8 L361.0,226.3 L360.5,223.8 L360.0,224.0 L359.5,224.0 L359.0,225.2 L358.5,225.8 L358.0,226.7 L357.5,228.1 L357.0,224.0 L356.5,224.1 L356.0,224.5 L355.5,225.4 L355.0,226.1 L354.5,227.3 L354.0,228.8 L353.5,223.6 L353.0,223.9 L352.5,224.3 L352.0,224.4 L351.5,225.6 L351.0,226.0 L350.5,226.6 L350.0,224.0 L349.5,223.7 L349.0,224.1 L348.5,224.7 L348.0,225.4 L347.5,226.0 L347.0,227.0 L346.5,223.7 L346.0,223.7 L345.5,224.0 L345.0,225.2 L344.5,225.4 L344.0,226.5 L343.5,226.9 L343.0,223.8 L342.5,223.8 L342.0,224.5 L341.5,225.1 L341.0,225.9 L340.5,226.8 L340.0,228.3 L339.5,223.7 L339.0,224.0 L338.5,224.6 L338.0,225.3 L337.5,226.3 L337.0,226.9 L336.5,227.9 L336.0,224.2 L335.5,223.7 L335.0,224.1 L334.5,224.8 L334.0,225.2 L333.5,225.8 L333.0,226.7 L332.5,224.1 L332.0,224.2 L331.5,224.2 L331.0,224.9 L330.5,225.8 L330.0,226.4 L329.5,230.4 L329.0,225.1 L328.5,224.9 L328.0,225.7 L327.5,226.8 L327.0,228.3 L326.5,229.3 L326.0,231.1 L325.5,225.4 L325.0,224.9 L324.5,225.2 L324.0,226.0 L323.5,226.6 L323.0,227.7 L322.5,228.2 L322.0,225.0 L321.5,225.0 L321.0,225.2 L320.5,226.3 L320.0,227.1 L319.5,227.8 L319.0,229.2 L318.5,225.0 L318.0,225.0 L317.5,225.3 L317.0,226.5 L316.5,227.7 L316.0,228.4 L315.5,230.0 L315.0,225.3 L314.5,225.0 L314.0,225.4 L313.5,226.9 L313.0,228.3 L312.5,229.7 L312.0,231.1 L311.5,225.3 L311.0,225.2 L310.5,225.8 L310.0,226.6 L309.5,227.4 L309.0,228.7 L308.5,230.2 L308.0,225.1 L307.5,225.0 L307.0,225.2 L306.5,226.3 L306.0,227.1 L305.5,228.3 L305.0,229.3 L304.5,225.0 L304.0,225.4 L303.5,225.6 L303.0,226.8 L302.5,227.6 L302.0,228.8 L301.5,229.9 L301.0,225.3 L300.5,224.9 L300.0,225.9 L299.5,226.7 L299.0,228.3 L298.5,230.0 L298.0,231.7 L297.5,225.1 L297.0,225.3 L296.5,225.4 L296.0,225.8 L295.5,226.8 L295.0,227.6 L294.5,228.1 L294.0,224.9 L293.5,225.0 L293.0,225.5 L292.5,226.6 L292.0,227.8 L291.5,229.1 L291.0,230.5 L290.5,225.0 L290.0,225.4 L289.5,225.8 L289.0,226.8 L288.5,228.0 L288.0,228.8 L287.5,229.8 L287.0,225.4 L286.5,225.0 L286.0,226.0 L285.5,226.8 L285.0,228.6 L284.5,229.8 L284.0,231.8 L283.5,225.1 L283.0,225.0 L282.5,225.6 L282.0,226.4 L281.5,227.7 L281.0,229.0 L280.5,230.4 L280.0,225.1 L279.5,225.4 L279.0,225.8 L278.5,226.0 L278.0,227.2 L277.5,228.2 L277.0,229.1 L276.5,225.1 L276.0,224.9 L275.5,225.9 L275.0,226.4 L274.5,227.9 L274.0,229.1 L273.5,230.1 L273.0,225.1 L272.5,225.1 L272.0,225.9 L271.5,226.8 L271.0,227.9 L270.5,229.5 L270.0,231.1 L269.5,225.2 L269.0,225.1 L268.5,225.9 L268.0,226.5 L267.5,227.6 L267.0,229.3 L266.5,230.9 L266.0,225.1 L265.5,225.4 L265.0,225.6 L264.5,226.8 L264.0,227.9 L263.5,229.1 L263.0,230.9 L262.5,225.2 L262.0,224.8 L261.5,225.5 L261.0,226.3 L260.5,227.2 L260.0,228.0 L259.5,228.5 L259.0,225.4 L258.5,225.1 L258.0,225.9 L257.5,227.1 L257.0,228.3 L256.5,229.9 L256.0,231.4 L255.5,225.1 L255.0,225.4 L254.5,225.4 L254.0,226.4 L253.5,227.6 L253.0,229.2 L252.5,230.1 L252.0,225.0 L251.5,224.8 L251.0,225.6 L250.5,226.8 L250.0,228.0 L249.5,229.3 L249.0,230.1 L248.5,225.3 L248.0,225.0 L247.5,225.6 L247.0,226.5 L246.5,226.7 L246.0,227.6 L245.5,229.0 L245.0,225.0 L244.5,224.9 L244.0,225.7 L243.5,227.3 L243.0,228.1 L242.5,229.7 L242.0,231.1 L241.5,225.0 L241.0,224.9 L240.5,225.4 L240.0,226.4 L239.5,227.5 L239.0,229.1 L238.5,230.3 L238.0,225.3 L237.5,224.8 L237.0,225.6 L236.5,226.5 L236.0,227.4 L235.5,228.4 L235.0,229.4 L234.5,225.0 L234.0,224.9 L233.5,225.9 L233.0,226.7 L232.5,228.1 L232.0,229.4 L231.5,230.5 L231.0,225.0 L230.5,225.3 L230.0,225.5 L229.5,226.9 L229.0,228.3 L228.5,229.5 L228.0,231.5 L227.5,225.2 L227.0,225.4 L226.5,225.5 L226.0,226.5 L225.5,227.3 L225.0,228.5 L224.5,229.7 L224.0,225.3 L223.5,224.9 L223.0,225.5 L222.5,226.7 L222.0,227.6 L221.5,228.8 L221.0,229.7 L220.5,225.1 L220.0,224.9 L219.5,225.2 L219.0,226.2 L218.5,227.2 L218.0,228.3 L217.5,228.8 L217.0,224.8 L216.5,225.1 L216.0,226.0 L215.5,226.6 L215.0,228.3 L214.5,229.2 L214.0,230.9 L213.5,222.0 L213.0,222.1 L212.5,222.1 L212.0,222.1 L211.5,222.2 L211.0,222.2 L210.5,222.3 L210.0,222.3 L209.5,222.3 L209.0,222.4 L208.5,222.4 L208.0,222.5 L207.5,222.5 L207.0,222.6 L206.5,222.6 L206.0,222.6 L205.5,222.7 L205.0,222.7 L204.5,222.8 L204.0,222.8Z" fill="#3d6a0a"/>
 <path d="M204.0,291.4 L204.5,291.4 L205.0,291.5 L205.5,291.5 L206.0,291.6 L206.5,291.6 L207.0,291.6 L207.5,291.7 L208.0,291.7 L208.5,291.8 L209.0,291.8 L209.5,291.8 L210.0,291.9 L210.5,291.9 L211.0,291.9 L211.5,292.0 L212.0,292.0 L212.5,292.1 L213.0,292.1 L213.5,292.1 L214.0,284.4 L214.5,285.9 L215.0,287.1 L215.5,287.8 L216.0,288.6 L216.5,289.2 L217.0,289.5 L217.5,285.4 L218.0,286.5 L218.5,287.2 L219.0,288.1 L219.5,288.9 L220.0,289.3 L220.5,289.0 L221.0,284.6 L221.5,285.8 L222.0,286.7 L222.5,287.7 L223.0,288.6 L223.5,289.6 L224.0,289.1 L224.5,284.4 L225.0,285.3 L225.5,286.9 L226.0,287.5 L226.5,289.0 L227.0,289.5 L227.5,289.1 L228.0,284.2 L228.5,285.6 L229.0,286.8 L229.5,287.9 L230.0,288.5 L230.5,289.4 L231.0,289.5 L231.5,284.7 L232.0,285.8 L232.5,286.7 L233.0,288.0 L233.5,289.1 L234.0,289.5 L234.5,289.4 L235.0,284.2 L235.5,285.7 L236.0,286.5 L236.5,288.0 L237.0,288.7 L237.5,289.5 L238.0,289.1 L238.5,285.7 L239.0,286.6 L239.5,287.5 L240.0,288.1 L240.5,289.1 L241.0,289.6 L241.5,289.3 L242.0,283.7 L242.5,285.6 L243.0,286.6 L243.5,287.9 L244.0,288.8 L244.5,289.4 L245.0,289.0 L245.5,285.0 L246.0,286.2 L246.5,286.9 L247.0,288.3 L247.5,288.9 L248.0,289.4 L248.5,289.6 L249.0,284.6 L249.5,285.7 L250.0,287.0 L250.5,287.7 L251.0,288.9 L251.5,289.1 L252.0,289.2 L252.5,285.3 L253.0,285.9 L253.5,287.0 L254.0,287.9 L254.5,288.9 L255.0,289.5 L255.5,289.6 L256.0,284.0 L256.5,285.4 L257.0,286.8 L257.5,287.9 L258.0,289.0 L258.5,289.1 L259.0,289.3 L259.5,285.8 L260.0,286.4 L260.5,287.2 L261.0,288.2 L261.5,289.2 L262.0,289.1 L262.5,289.2 L263.0,285.8 L263.5,286.8 L264.0,287.4 L264.5,288.4 L265.0,288.7 L265.5,289.6 L266.0,289.1 L266.5,284.9 L267.0,286.2 L267.5,287.0 L268.0,287.8 L268.5,289.1 L269.0,289.2 L269.5,289.2 L270.0,283.6 L270.5,285.2 L271.0,286.7 L271.5,287.6 L272.0,288.9 L272.5,289.2 L273.0,289.2 L273.5,285.3 L274.0,286.2 L274.5,287.6 L275.0,288.1 L275.5,289.0 L276.0,289.1 L276.5,289.1 L277.0,284.8 L277.5,285.9 L278.0,287.2 L278.5,287.8 L279.0,288.9 L279.5,289.4 L280.0,289.1 L280.5,286.2 L281.0,287.0 L281.5,287.6 L282.0,288.2 L282.5,289.1 L283.0,289.5 L283.5,289.3 L284.0,283.5 L284.5,284.9 L285.0,286.6 L285.5,287.8 L286.0,288.7 L286.5,289.1 L287.0,289.4 L287.5,284.6 L288.0,285.4 L288.5,286.8 L289.0,287.9 L289.5,288.8 L290.0,289.0 L290.5,289.4 L291.0,285.0 L291.5,286.1 L292.0,286.9 L292.5,288.2 L293.0,289.1 L293.5,289.1 L294.0,289.3 L294.5,285.7 L295.0,286.7 L295.5,287.8 L296.0,288.2 L296.5,289.1 L297.0,289.5 L297.5,289.5 L298.0,284.4 L298.5,285.7 L299.0,286.8 L299.5,288.0 L300.0,288.8 L300.5,289.1 L301.0,289.1 L301.5,284.5 L302.0,286.0 L302.5,287.1 L303.0,287.8 L303.5,289.0 L304.0,289.4 L304.5,289.1 L305.0,284.6 L305.5,286.1 L306.0,286.8 L306.5,287.7 L307.0,288.9 L307.5,289.3 L308.0,289.5 L308.5,286.1 L309.0,286.9 L309.5,287.9 L310.0,288.2 L310.5,288.8 L311.0,289.6 L311.5,289.3 L312.0,284.3 L312.5,285.5 L313.0,286.6 L313.5,288.0 L314.0,288.7 L314.5,289.5 L315.0,289.3 L315.5,284.2 L316.0,285.5 L316.5,286.7 L317.0,287.6 L317.5,289.0 L318.0,289.2 L318.5,289.1 L319.0,284.2 L319.5,285.4 L320.0,286.6 L320.5,288.0 L321.0,289.1 L321.5,289.2 L322.0,289.5 L322.5,284.8 L323.0,286.0 L323.5,286.8 L324.0,287.9 L324.5,288.6 L325.0,289.2 L325.5,289.4 L326.0,284.7 L326.5,285.9 L327.0,286.9 L327.5,287.7 L328.0,288.6 L328.5,289.1 L329.0,289.3 L329.5,286.5 L330.0,288.9 L330.5,289.2 L331.0,289.5 L331.5,290.2 L332.0,290.5 L332.5,290.3 L333.0,287.9 L333.5,288.6 L334.0,289.2 L334.5,289.7 L335.0,290.0 L335.5,290.1 L336.0,290.6 L336.5,287.2 L337.0,288.2 L337.5,288.8 L338.0,289.3 L338.5,290.0 L339.0,290.3 L339.5,290.6 L340.0,286.5 L340.5,287.5 L341.0,288.4 L341.5,289.1 L342.0,289.7 L342.5,290.3 L343.0,290.6 L343.5,287.0 L344.0,287.7 L344.5,288.5 L345.0,289.2 L345.5,290.2 L346.0,290.2 L346.5,290.7 L347.0,287.7 L347.5,288.4 L348.0,289.3 L348.5,289.6 L349.0,290.2 L349.5,290.6 L350.0,290.2 L350.5,287.9 L351.0,288.5 L351.5,289.3 L352.0,289.5 L352.5,290.1 L353.0,290.5 L353.5,290.2 L354.0,286.8 L354.5,287.8 L355.0,288.4 L355.5,289.2 L356.0,289.9 L356.5,290.6 L357.0,290.6 L357.5,287.1 L358.0,287.9 L358.5,288.7 L359.0,289.3 L359.5,289.8 L360.0,290.2 L360.5,290.2 L361.0,287.4 L361.5,288.5 L362.0,289.1 L362.5,289.7 L363.0,290.3 L363.5,290.2 L364.0,290.2 L364.5,287.7 L365.0,288.8 L365.5,289.1 L366.0,289.4 L366.5,290.0 L367.0,290.4 L367.5,290.6 L368.0,286.6 L368.5,287.5 L369.0,288.2 L369.5,289.4 L370.0,290.0 L370.5,290.4 L371.0,290.1 L371.5,287.3 L372.0,287.9 L372.5,288.7 L373.0,289.3 L373.5,289.9 L374.0,290.1 L374.5,290.4 L375.0,286.9 L375.5,287.6 L376.0,288.7 L376.5,289.5 L377.0,290.2 L377.5,290.6 L378.0,290.6 L378.5,287.1 L379.0,287.6 L379.5,288.6 L380.0,289.2 L380.5,289.7 L381.0,289.7 L381.5,289.9 L382.0,286.2 L382.5,286.7 L383.0,287.7 L383.5,288.0 L384.0,288.7 L384.5,289.0 L385.0,289.1 L385.5,285.4 L386.0,286.3 L386.5,286.7 L387.0,287.6 L387.5,287.9 L388.0,287.9 L388.5,288.0 L389.0,285.1 L389.5,285.7 L390.0,286.3 L390.5,286.8 L391.0,287.1 L391.5,286.7 L392.0,287.0 L392.5,283.8 L393.0,284.1 L393.5,284.6 L394.0,285.1 L394.5,285.4 L395.0,285.5 L395.5,285.5 L396.0,282.8 L396.5,283.4 L397.0,283.6 L397.5,284.1 L398.0,284.5 L398.5,284.3 L399.0,283.9 L399.5,282.4 L400.0,282.7 L400.5,283.1 L401.0,282.7 L401.5,282.9 L402.0,282.9 L402.5,282.7 L403.0,281.1 L403.5,281.0 L404.0,281.0 L404.5,281.2 L405.0,289.3 L405.5,290.0 L406.0,289.7 L406.5,286.7 L407.0,287.8 L407.5,288.5 L408.0,289.0 L408.5,289.3 L409.0,289.8 L409.5,289.6 L410.0,285.3 L410.5,286.5 L411.0,287.2 L411.5,288.4 L412.0,289.6 L412.5,289.9 L413.0,290.0 L413.5,286.0 L414.0,287.3 L414.5,287.7 L415.0,288.8 L415.5,289.6 L416.0,289.5 L416.5,289.7 L417.0,286.8 L417.5,287.8 L418.0,288.2 L418.5,289.0 L419.0,289.6 L419.5,290.0 L420.0,290.0 L420.5,286.1 L421.0,286.8 L421.5,287.7 L422.0,288.9 L422.5,289.6 L423.0,289.9 L423.5,289.6 L424.0,285.4 L424.5,286.0 L425.0,287.3 L425.5,288.3 L426.0,289.4 L426.5,289.6 L427.0,290.0 L427.5,286.9 L428.0,287.6 L428.5,288.3 L429.0,288.9 L429.5,289.4 L430.0,289.5 L430.5,289.8 L431.0,285.8 L431.5,286.9 L432.0,287.6 L432.5,288.7 L433.0,289.4 L433.5,289.8 L434.0,289.8 L434.5,286.4 L435.0,287.2 L435.5,288.0 L436.0,288.8 L436.5,289.7 L437.0,289.8 L437.5,290.0 L438.0,285.3 L438.5,286.5 L439.0,287.2 L439.5,288.3 L440.0,289.4 L440.5,289.9 L441.0,289.8 L441.5,287.2 L442.0,287.5 L442.5,288.5 L443.0,289.1 L443.5,289.3 L444.0,289.8 L444.5,289.7 L445.0,287.3 L445.5,287.6 L446.0,288.5 L446.5,289.1 L447.0,289.3 L447.5,289.6 L448.0,289.8 L448.5,285.6 L449.0,286.7 L449.5,287.8 L450.0,288.4 L450.5,289.1 L451.0,289.7 L451.5,289.7 L452.0,285.4 L452.5,286.3 L453.0,287.6 L453.5,288.4 L454.0,289.4 L454.5,289.6 L455.0,289.9 L455.5,285.5 L456.0,286.7 L456.5,287.5 L457.0,288.5 L457.5,289.3 L458.0,289.9 L458.5,290.0 L459.0,285.8 L459.5,286.9 L460.0,287.4 L460.5,288.6 L461.0,289.5 L461.5,289.8 L462.0,289.8 L462.5,286.3 L463.0,287.3 L463.5,288.0 L464.0,288.6 L464.5,289.3 L465.0,289.7 L465.5,289.8 L466.0,285.0 L466.5,286.3 L467.0,287.3 L467.5,288.3 L468.0,289.3 L468.5,290.0 L469.0,290.1 L469.5,286.5 L470.0,287.4 L470.5,288.0 L471.0,288.6 L471.5,289.7 L472.0,290.1 L472.5,289.7 L473.0,286.9 L473.5,287.7 L474.0,288.4 L474.5,288.7 L475.0,289.7 L475.5,289.9 L476.0,289.5 L476.5,285.9 L477.0,287.1 L477.5,288.2 L478.0,288.5 L478.5,289.5 L479.0,289.8 L479.5,290.1 L480.0,285.1 L480.5,286.1 L481.0,287.3 L481.5,288.4 L482.0,289.0 L482.5,290.1 L483.0,289.7 L483.5,286.3 L484.0,287.1 L484.5,288.2 L485.0,288.9 L485.5,289.6 L486.0,290.0 L486.5,290.0 L487.0,286.9 L487.5,287.3 L488.0,288.0 L488.5,289.0 L489.0,289.4 L489.5,289.9 L490.0,290.0 L490.5,286.3 L491.0,287.3 L491.5,287.8 L492.0,288.7 L492.5,289.2 L493.0,289.9 L493.5,290.0 L494.0,285.3 L494.5,286.5 L495.0,287.8 L495.5,288.4 L496.0,289.5 L496.5,289.8 L497.0,289.7 L497.5,285.9 L498.0,286.9 L498.5,287.8 L499.0,288.4 L499.5,289.5 L500.0,290.0 L500.5,290.1 L501.0,285.8 L501.5,286.9 L502.0,288.0 L502.5,288.6 L503.0,289.2 L503.5,289.7 L504.0,289.8 L504.5,287.2 L505.0,287.9 L505.5,288.5 L506.0,289.2 L506.5,289.7 L507.0,289.9 L507.5,290.0 L508.0,284.9 L508.5,286.2 L509.0,287.6 L509.5,288.6 L510.0,289.3 L510.5,289.9 L511.0,290.1 L511.5,285.5 L512.0,286.7 L512.5,287.5 L513.0,288.6 L513.5,289.1 L514.0,289.7 L514.5,289.8 L515.0,286.4 L515.5,287.2 L516.0,288.4 L516.5,289.0 L517.0,289.2 L517.5,290.0 L518.0,289.7 L518.5,287.3 L519.0,287.9 L519.5,288.5 L520.0,289.0 L520.5,289.3 L521.0,289.9 L521.5,289.9 L522.0,284.7 L522.5,286.4 L523.0,287.3 L523.5,288.5 L524.0,289.2 L524.5,289.9 L525.0,289.9 L525.5,286.4 L526.0,287.3 L526.5,288.2 L527.0,288.6 L527.5,289.6 L528.0,289.6 L528.5,289.9 L529.0,285.5 L529.5,286.5 L530.0,287.7 L530.5,288.4 L531.0,289.3 L531.5,289.7 L532.0,289.6 L532.5,286.9 L533.0,287.9 L533.5,288.3 L534.0,288.7 L534.5,289.4 L535.0,289.7 L535.5,289.5 L536.0,285.9 L536.5,286.8 L537.0,287.4 L537.5,288.7 L538.0,289.4 L538.5,289.9 L539.0,289.6 L539.5,286.6 L540.0,287.2 L540.5,288.1 L541.0,288.7 L541.5,289.7 L542.0,289.5 L542.5,289.8 L543.0,286.5 L543.5,287.3 L544.0,288.3 L544.5,288.9 L545.0,289.7 L545.5,289.6 L546.0,290.0 L546.5,286.4 L547.0,287.1 L547.5,287.8 L548.0,289.0 L548.5,289.4 L549.0,289.9 L549.5,289.6 L550.0,285.1 L550.5,286.6 L551.0,287.7 L551.5,288.5 L552.0,289.5 L552.5,290.1 L553.0,289.5 L553.5,286.0 L554.0,287.1 L554.5,287.7 L555.0,288.5 L555.5,289.2 L556.0,289.7 L556.5,289.6 L557.0,286.1 L557.5,286.9 L558.0,288.0 L558.5,288.8 L559.0,289.2 L559.5,290.0 L560.0,289.7 L560.5,285.6 L561.0,286.9 L561.5,287.7 L562.0,288.7 L562.5,289.1 L563.0,289.4 L563.5,289.5 L564.0,285.3 L564.5,286.1 L565.0,287.2 L565.5,287.7 L566.0,288.7 L566.5,288.6 L567.0,289.0 L567.5,284.5 L568.0,285.5 L568.5,286.4 L569.0,287.1 L569.5,288.0 L570.0,288.6 L570.5,288.1 L571.0,284.9 L571.5,285.5 L572.0,286.3 L572.5,286.9 L573.0,287.5 L573.5,287.5 L574.0,287.7 L574.5,284.1 L575.0,285.1 L575.5,285.9 L576.0,286.4 L576.5,286.7 L577.0,286.8 L577.5,286.8 L578.0,282.8 L578.5,284.1 L579.0,284.8 L579.5,285.3 L580.0,286.2 L580.5,286.6 L581.0,286.1 L581.5,283.9 L582.0,284.5 L582.5,284.7 L583.0,285.3 L583.5,285.8 L584.0,285.4 L584.5,285.7 L585.0,283.2 L585.5,284.0 L586.0,284.3 L586.5,284.3 L587.0,284.9 L587.5,284.9 L588.0,284.8 L588.5,282.4 L589.0,283.1 L589.5,283.2 L590.0,283.8 L590.5,283.6 L591.0,284.0 L591.5,283.6 L592.0,281.5 L592.5,282.1 L593.0,282.4 L593.5,282.7 L594.0,283.0 L594.5,283.1 L595.0,283.1 L595.5,281.7 L596.0,281.6 L596.5,281.7 L597.0,281.9 L597.5,282.2 L598.0,289.6 L598.5,289.5 L599.0,286.0 L599.5,287.0 L600.0,287.5 L600.5,288.6 L601.0,289.0 L601.5,289.5 L602.0,289.7 L602.5,286.6 L603.0,287.2 L603.5,287.8 L604.0,288.9 L604.5,289.2 L605.0,289.5 L605.5,289.4 L606.0,283.8 L606.5,285.2 L607.0,286.6 L607.5,288.2 L608.0,289.0 L608.5,289.7 L609.0,289.7 L609.5,286.3 L610.0,287.4 L610.5,287.9 L611.0,288.8 L611.5,289.1 L612.0,289.7 L612.5,289.8 L613.0,284.9 L613.5,285.9 L614.0,287.3 L614.5,288.2 L615.0,289.3 L615.5,289.7 L616.0,289.5 L616.5,285.1 L617.0,286.3 L617.5,287.2 L618.0,288.0 L618.5,288.9 L619.0,289.2 L619.5,289.6 L620.0,284.2 L620.5,285.7 L621.0,286.6 L621.5,288.1 L622.0,289.3 L622.5,289.6 L623.0,289.4 L623.5,286.9 L624.0,287.6 L624.5,288.1 L625.0,288.6 L625.5,289.0 L626.0,289.5 L626.5,289.6 L627.0,285.2 L627.5,286.2 L628.0,287.3 L628.5,288.5 L629.0,289.3 L629.5,289.5 L630.0,289.7 L630.5,285.9 L631.0,286.7 L631.5,288.0 L632.0,288.2 L632.5,289.1 L633.0,289.6 L633.5,289.6 L634.0,284.5 L634.5,285.7 L635.0,287.2 L635.5,288.2 L636.0,288.8 L636.5,289.3 L637.0,289.6 L637.5,286.4 L638.0,287.4 L638.5,287.8 L639.0,288.9 L639.5,289.5 L640.0,289.5 L640.5,289.4 L641.0,284.7 L641.5,285.8 L642.0,286.9 L642.5,287.9 L643.0,288.9 L643.5,289.4 L644.0,289.5 L644.5,286.4 L645.0,287.5 L645.5,287.9 L646.0,288.9 L646.5,289.3 L647.0,289.5 L647.5,289.7 L648.0,284.7 L648.5,285.8 L649.0,287.0 L649.5,288.0 L650.0,289.0 L650.5,289.6 L651.0,289.7 L651.5,286.6 L652.0,287.4 L652.5,287.9 L653.0,288.7 L653.5,289.0 L654.0,289.5 L654.5,289.2 L655.0,285.4 L655.5,286.3 L656.0,287.6 L656.5,288.3 L657.0,289.1 L657.5,289.5 L658.0,289.3 L658.5,285.5 L659.0,286.8 L659.5,287.8 L660.0,288.4 L660.5,289.2 L661.0,289.3 L661.5,289.3 L662.0,284.4 L662.5,285.5 L663.0,286.7 L663.5,287.7 L664.0,288.9 L664.5,289.3 L665.0,289.6 L665.5,285.3 L666.0,286.2 L666.5,287.4 L667.0,288.5 L667.5,289.2 L668.0,289.6 L668.5,289.3 L669.0,284.8 L669.5,285.9 L670.0,287.0 L670.5,288.0 L671.0,289.3 L671.5,289.6 L672.0,289.7 L672.5,285.7 L673.0,286.8 L673.5,287.8 L674.0,288.7 L674.5,289.1 L675.0,289.3 L675.5,289.5 L676.0,283.8 L676.5,285.3 L677.0,287.0 L677.5,287.6 L678.0,288.8 L678.5,289.5 L679.0,289.5 L679.5,285.6 L680.0,286.5 L680.5,287.5 L681.0,288.4 L681.5,288.9 L682.0,289.7 L682.5,289.6 L683.0,292.9 L683.5,292.9 L684.0,292.9 L684.5,292.9 L685.0,292.9 L685.5,292.9 L686.0,292.9 L686.5,292.9 L687.0,292.9 L687.5,292.9 L688.0,292.9 L688.5,292.9 L689.0,292.9 L689.5,292.9 L690.0,292.9 L690.5,292.9 L691.0,292.9 L691.0,294.1 L690.5,294.1 L690.0,294.1 L689.5,294.1 L689.0,294.1 L688.5,294.1 L688.0,294.1 L687.5,294.1 L687.0,294.1 L686.5,294.1 L686.0,294.1 L685.5,294.1 L685.0,294.1 L684.5,294.1 L684.0,294.1 L683.5,294.1 L683.0,294.1 L682.5,298.0 L682.0,297.8 L681.5,298.3 L681.0,299.1 L680.5,299.6 L680.0,300.8 L679.5,301.6 L679.0,297.7 L678.5,297.6 L678.0,298.6 L677.5,299.6 L677.0,300.6 L676.5,301.6 L676.0,302.9 L675.5,297.7 L675.0,297.7 L674.5,298.1 L674.0,299.6 L673.5,300.7 L673.0,301.4 L672.5,302.7 L672.0,297.9 L671.5,298.1 L671.0,298.7 L670.5,299.2 L670.0,300.8 L669.5,301.8 L669.0,303.1 L668.5,297.7 L668.0,297.9 L667.5,298.1 L667.0,299.0 L666.5,299.6 L666.0,300.5 L665.5,301.3 L665.0,298.1 L664.5,298.0 L664.0,298.3 L663.5,299.7 L663.0,300.6 L662.5,301.5 L662.0,303.1 L661.5,297.7 L661.0,298.1 L660.5,298.0 L660.0,299.0 L659.5,299.9 L659.0,300.8 L658.5,301.3 L658.0,297.9 L657.5,298.2 L657.0,298.3 L656.5,299.1 L656.0,300.0 L655.5,300.5 L655.0,301.7 L654.5,297.8 L654.0,297.9 L653.5,298.3 L653.0,299.3 L652.5,300.2 L652.0,301.2 L651.5,302.3 L651.0,298.1 L650.5,298.1 L650.0,298.6 L649.5,299.9 L649.0,300.8 L648.5,302.0 L648.0,304.0 L647.5,297.9 L647.0,298.2 L646.5,298.6 L646.0,298.8 L645.5,299.9 L645.0,301.0 L644.5,301.5 L644.0,297.9 L643.5,297.8 L643.0,298.3 L642.5,299.1 L642.0,300.7 L641.5,301.5 L641.0,302.5 L640.5,297.6 L640.0,298.2 L639.5,298.5 L639.0,299.7 L638.5,300.8 L638.0,302.2 L637.5,303.2 L637.0,298.0 L636.5,297.8 L636.0,298.4 L635.5,299.4 L635.0,300.5 L634.5,302.3 L634.0,303.5 L633.5,297.8 L633.0,298.0 L632.5,298.6 L632.0,298.7 L631.5,299.8 L631.0,300.8 L630.5,301.6 L630.0,297.7 L629.5,297.8 L629.0,298.3 L628.5,299.2 L628.0,299.8 L627.5,300.6 L627.0,301.5 L626.5,297.8 L626.0,298.2 L625.5,298.3 L625.0,299.3 L624.5,300.0 L624.0,301.2 L623.5,301.8 L623.0,298.1 L622.5,298.2 L622.0,298.2 L621.5,299.7 L621.0,301.1 L620.5,302.6 L620.0,303.6 L619.5,298.0 L619.0,297.9 L618.5,298.0 L618.0,298.7 L617.5,299.7 L617.0,300.6 L616.5,301.3 L616.0,297.8 L615.5,297.7 L615.0,298.5 L614.5,299.4 L614.0,300.8 L613.5,301.8 L613.0,303.0 L612.5,298.1 L612.0,297.9 L611.5,298.5 L611.0,299.3 L610.5,300.1 L610.0,301.0 L609.5,301.7 L609.0,297.8 L608.5,298.2 L608.0,298.6 L607.5,299.6 L607.0,301.3 L606.5,302.5 L606.0,303.9 L605.5,298.0 L605.0,297.8 L604.5,298.2 L604.0,299.1 L603.5,300.2 L603.0,300.8 L602.5,302.0 L602.0,298.2 L601.5,297.9 L601.0,298.6 L600.5,299.2 L600.0,300.2 L599.5,301.2 L599.0,302.5 L598.5,298.2 L598.0,297.8 L597.5,305.8 L597.0,306.4 L596.5,306.5 L596.0,306.8 L595.5,307.5 L595.0,305.2 L594.5,305.2 L594.0,305.4 L593.5,305.4 L593.0,306.0 L592.5,306.3 L592.0,306.6 L591.5,304.3 L591.0,303.8 L590.5,304.1 L590.0,304.1 L589.5,304.6 L589.0,304.7 L588.5,305.4 L588.0,303.1 L587.5,302.8 L587.0,303.3 L586.5,303.8 L586.0,304.3 L585.5,305.1 L585.0,305.7 L584.5,302.1 L584.0,302.4 L583.5,302.3 L583.0,302.6 L582.5,303.2 L582.0,304.4 L581.5,305.0 L581.0,301.5 L580.5,301.4 L580.0,301.7 L579.5,301.9 L579.0,302.8 L578.5,303.7 L578.0,304.4 L577.5,300.7 L577.0,300.8 L576.5,300.9 L576.0,301.0 L575.5,302.0 L575.0,302.5 L574.5,303.2 L574.0,300.3 L573.5,299.7 L573.0,300.1 L572.5,300.6 L572.0,300.9 L571.5,301.9 L571.0,302.4 L570.5,299.3 L570.0,299.4 L569.5,299.4 L569.0,299.9 L568.5,300.6 L568.0,300.8 L567.5,301.5 L567.0,298.6 L566.5,298.5 L566.0,299.1 L565.5,299.7 L565.0,300.8 L564.5,302.3 L564.0,303.6 L563.5,298.3 L563.0,298.3 L562.5,298.2 L562.0,299.0 L561.5,299.8 L561.0,300.5 L560.5,301.5 L560.0,297.4 L559.5,297.5 L559.0,297.8 L558.5,298.4 L558.0,299.4 L557.5,300.3 L557.0,300.9 L556.5,297.3 L556.0,297.4 L555.5,298.0 L555.0,298.7 L554.5,300.2 L554.0,301.3 L553.5,302.4 L553.0,297.3 L552.5,297.4 L552.0,298.1 L551.5,299.4 L551.0,300.1 L550.5,301.5 L550.0,302.9 L549.5,297.9 L549.0,297.9 L548.5,298.2 L548.0,299.1 L547.5,300.1 L547.0,301.4 L546.5,302.9 L546.0,297.4 L545.5,297.5 L545.0,297.6 L544.5,298.3 L544.0,299.1 L543.5,299.6 L543.0,300.3 L542.5,297.4 L542.0,297.4 L541.5,297.7 L541.0,298.5 L540.5,299.5 L540.0,300.3 L539.5,301.5 L539.0,297.8 L538.5,297.5 L538.0,298.1 L537.5,298.9 L537.0,300.1 L536.5,301.7 L536.0,302.7 L535.5,297.9 L535.0,297.5 L534.5,297.9 L534.0,298.4 L533.5,299.8 L533.0,300.1 L532.5,301.1 L532.0,297.8 L531.5,297.7 L531.0,297.9 L530.5,298.9 L530.0,299.7 L529.5,300.3 L529.0,301.2 L528.5,297.6 L528.0,297.3 L527.5,298.1 L527.0,298.5 L526.5,299.2 L526.0,300.1 L525.5,300.4 L525.0,297.4 L524.5,297.4 L524.0,298.1 L523.5,299.0 L523.0,300.4 L522.5,301.7 L522.0,303.1 L521.5,297.7 L521.0,297.8 L520.5,297.9 L520.0,299.0 L519.5,299.8 L519.0,300.7 L518.5,301.5 L518.0,297.4 L517.5,297.4 L517.0,297.8 L516.5,298.9 L516.0,300.0 L515.5,300.8 L515.0,302.2 L514.5,297.5 L514.0,297.7 L513.5,298.2 L513.0,298.8 L512.5,300.0 L512.0,300.7 L511.5,301.8 L511.0,297.5 L510.5,297.4 L510.0,298.1 L509.5,299.1 L509.0,300.2 L508.5,301.4 L508.0,302.5 L507.5,297.7 L507.0,297.6 L506.5,297.7 L506.0,298.8 L505.5,299.5 L505.0,300.2 L504.5,301.3 L504.0,297.5 L503.5,297.3 L503.0,297.9 L502.5,299.2 L502.0,300.1 L501.5,301.4 L501.0,302.1 L500.5,297.7 L500.0,297.3 L499.5,297.9 L499.0,298.7 L498.5,299.7 L498.0,301.0 L497.5,301.8 L497.0,297.5 L496.5,297.4 L496.0,298.1 L495.5,298.9 L495.0,300.1 L494.5,301.5 L494.0,302.7 L493.5,297.8 L493.0,297.5 L492.5,297.8 L492.0,299.2 L491.5,300.0 L491.0,301.1 L490.5,302.4 L490.0,297.5 L489.5,297.3 L489.0,297.9 L488.5,298.5 L488.0,299.4 L487.5,300.6 L487.0,301.5 L486.5,297.4 L486.0,297.6 L485.5,297.9 L485.0,299.1 L484.5,300.1 L484.0,300.9 L483.5,302.1 L483.0,297.3 L482.5,297.5 L482.0,298.2 L481.5,299.1 L481.0,300.6 L480.5,301.5 L480.0,302.8 L479.5,297.9 L479.0,297.3 L478.5,297.9 L478.0,298.7 L477.5,299.8 L477.0,301.2 L476.5,301.9 L476.0,297.3 L475.5,297.4 L475.0,297.9 L474.5,299.0 L474.0,299.8 L473.5,300.6 L473.0,302.0 L472.5,297.6 L472.0,297.5 L471.5,297.9 L471.0,298.6 L470.5,299.6 L470.0,300.7 L469.5,301.6 L469.0,297.6 L468.5,297.4 L468.0,298.4 L467.5,299.3 L467.0,300.1 L466.5,301.7 L466.0,303.0 L465.5,297.8 L465.0,297.4 L464.5,297.8 L464.0,298.7 L463.5,299.8 L463.0,301.1 L462.5,301.9 L462.0,297.7 L461.5,297.4 L461.0,298.2 L460.5,298.7 L460.0,299.0 L459.5,300.4 L459.0,301.0 L458.5,297.5 L458.0,297.8 L457.5,297.9 L457.0,298.6 L456.5,299.8 L456.0,301.2 L455.5,302.0 L455.0,297.5 L454.5,297.7 L454.0,298.2 L453.5,299.1 L453.0,299.8 L452.5,300.9 L452.0,302.1 L451.5,297.9 L451.0,297.4 L450.5,298.3 L450.0,299.0 L449.5,300.0 L449.0,301.6 L448.5,302.8 L448.0,297.4 L447.5,297.5 L447.0,297.9 L446.5,299.3 L446.0,299.9 L445.5,301.5 L445.0,302.5 L444.5,297.3 L444.0,297.5 L443.5,298.2 L443.0,298.7 L442.5,299.8 L442.0,300.8 L441.5,302.3 L441.0,297.9 L440.5,297.8 L440.0,298.3 L439.5,299.2 L439.0,300.3 L438.5,300.9 L438.0,302.3 L437.5,297.7 L437.0,297.5 L436.5,297.9 L436.0,298.2 L435.5,299.0 L435.0,299.9 L434.5,300.8 L434.0,297.9 L433.5,297.6 L433.0,298.3 L432.5,298.8 L432.0,300.1 L431.5,301.2 L431.0,302.2 L430.5,297.5 L430.0,297.7 L429.5,297.7 L429.0,298.4 L428.5,299.4 L428.0,300.2 L427.5,301.1 L427.0,297.6 L426.5,297.3 L426.0,298.1 L425.5,299.1 L425.0,299.8 L424.5,301.3 L424.0,302.0 L423.5,297.4 L423.0,297.6 L422.5,298.2 L422.0,299.0 L421.5,299.8 L421.0,301.0 L420.5,301.6 L420.0,297.9 L419.5,297.9 L419.0,298.1 L418.5,299.3 L418.0,300.3 L417.5,301.2 L417.0,302.4 L416.5,297.8 L416.0,297.6 L415.5,298.2 L415.0,298.9 L414.5,300.0 L414.0,301.2 L413.5,302.3 L413.0,297.5 L412.5,297.7 L412.0,298.0 L411.5,299.1 L411.0,300.3 L410.5,301.4 L410.0,302.2 L409.5,297.8 L409.0,297.7 L408.5,297.9 L408.0,298.4 L407.5,299.3 L407.0,300.2 L406.5,301.4 L406.0,297.7 L405.5,297.3 L405.0,297.8 L404.5,306.9 L404.0,307.2 L403.5,307.3 L403.0,307.5 L402.5,305.4 L402.0,305.3 L401.5,305.1 L401.0,305.2 L400.5,305.8 L400.0,305.7 L399.5,305.9 L399.0,304.0 L398.5,303.9 L398.0,303.7 L397.5,304.3 L397.0,304.8 L396.5,305.1 L396.0,305.8 L395.5,302.4 L395.0,302.0 L394.5,301.9 L394.0,302.3 L393.5,302.5 L393.0,303.0 L392.5,303.3 L392.0,300.8 L391.5,301.0 L391.0,301.0 L390.5,301.3 L390.0,301.5 L389.5,302.3 L389.0,302.5 L388.5,299.5 L388.0,299.6 L387.5,299.9 L387.0,300.1 L386.5,300.4 L386.0,301.4 L385.5,301.7 L385.0,298.9 L384.5,298.3 L384.0,299.1 L383.5,299.4 L383.0,300.5 L382.5,301.2 L382.0,302.2 L381.5,297.6 L381.0,297.4 L380.5,297.9 L380.0,297.9 L379.5,298.4 L379.0,299.4 L378.5,299.7 L378.0,297.0 L377.5,296.8 L377.0,297.5 L376.5,297.8 L376.0,298.4 L375.5,299.6 L375.0,299.9 L374.5,297.1 L374.0,297.0 L373.5,297.5 L373.0,298.1 L372.5,298.8 L372.0,299.4 L371.5,300.5 L371.0,297.0 L370.5,296.8 L370.0,297.6 L369.5,298.5 L369.0,299.2 L368.5,300.6 L368.0,301.7 L367.5,296.7 L367.0,297.1 L366.5,297.0 L366.0,298.1 L365.5,298.9 L365.0,299.8 L364.5,300.6 L364.0,297.0 L363.5,297.0 L363.0,297.3 L362.5,297.8 L362.0,298.5 L361.5,299.2 L361.0,300.3 L360.5,296.8 L360.0,296.9 L359.5,297.6 L359.0,298.1 L358.5,298.6 L358.0,299.8 L357.5,300.4 L357.0,296.8 L356.5,297.0 L356.0,297.1 L355.5,298.0 L355.0,299.1 L354.5,299.8 L354.0,301.3 L353.5,297.2 L353.0,297.0 L352.5,297.5 L352.0,297.6 L351.5,298.1 L351.0,298.7 L350.5,299.6 L350.0,297.2 L349.5,296.8 L349.0,297.2 L348.5,297.9 L348.0,298.7 L347.5,299.1 L347.0,299.9 L346.5,296.7 L346.0,297.2 L345.5,297.6 L345.0,297.8 L344.5,298.8 L344.0,299.6 L343.5,300.4 L343.0,297.2 L342.5,296.8 L342.0,297.6 L341.5,298.1 L341.0,298.9 L340.5,299.7 L340.0,301.0 L339.5,296.7 L339.0,296.9 L338.5,297.0 L338.0,298.1 L337.5,298.6 L337.0,299.7 L336.5,300.1 L336.0,297.2 L335.5,297.2 L335.0,297.0 L334.5,298.3 L334.0,299.0 L333.5,299.4 L333.0,300.4 L332.5,297.0 L332.0,296.8 L331.5,297.4 L331.0,298.1 L330.5,298.8 L330.0,300.0 L329.5,303.7 L329.0,298.3 L328.5,297.9 L328.0,298.7 L327.5,299.7 L327.0,300.9 L326.5,302.4 L326.0,303.2 L325.5,298.1 L325.0,298.3 L324.5,298.2 L324.0,299.5 L323.5,300.3 L323.0,301.1 L322.5,302.2 L322.0,298.4 L321.5,298.2 L321.0,298.6 L320.5,299.7 L320.0,300.6 L319.5,302.1 L319.0,303.7 L318.5,298.1 L318.0,298.3 L317.5,298.9 L317.0,299.8 L316.5,300.8 L316.0,302.0 L315.5,303.6 L315.0,297.8 L314.5,297.9 L314.0,298.6 L313.5,299.8 L313.0,301.3 L312.5,302.1 L312.0,303.8 L311.5,298.3 L311.0,298.4 L310.5,298.2 L310.0,299.4 L309.5,299.6 L309.0,300.4 L308.5,301.4 L308.0,297.9 L307.5,298.2 L307.0,298.6 L306.5,298.9 L306.0,300.2 L305.5,300.6 L305.0,301.8 L304.5,298.1 L304.0,297.9 L303.5,298.8 L303.0,299.4 L302.5,301.1 L302.0,302.3 L301.5,303.3 L301.0,298.0 L300.5,298.2 L300.0,298.7 L299.5,299.8 L299.0,300.7 L298.5,302.1 L298.0,303.5 L297.5,298.1 L297.0,298.3 L296.5,298.7 L296.0,299.4 L295.5,300.4 L295.0,301.4 L294.5,302.7 L294.0,298.0 L293.5,298.4 L293.0,298.5 L292.5,299.4 L292.0,300.7 L291.5,301.4 L291.0,302.3 L290.5,298.3 L290.0,298.1 L289.5,298.4 L289.0,299.7 L288.5,300.8 L288.0,302.3 L287.5,303.9 L287.0,298.1 L286.5,298.2 L286.0,298.7 L285.5,300.0 L285.0,301.2 L284.5,302.4 L284.0,304.1 L283.5,298.3 L283.0,297.9 L282.5,298.7 L282.0,299.2 L281.5,300.1 L281.0,301.1 L280.5,302.6 L280.0,298.0 L279.5,298.4 L279.0,298.7 L278.5,299.5 L278.0,300.3 L277.5,301.1 L277.0,302.1 L276.5,298.1 L276.0,298.3 L275.5,298.7 L275.0,299.9 L274.5,300.8 L274.0,302.2 L273.5,303.1 L273.0,298.3 L272.5,298.1 L272.0,298.6 L271.5,299.8 L271.0,301.4 L270.5,302.7 L270.0,304.3 L269.5,298.2 L269.0,298.1 L268.5,298.3 L268.0,299.3 L267.5,300.2 L267.0,301.4 L266.5,303.0 L266.0,297.8 L265.5,297.8 L265.0,298.5 L264.5,299.4 L264.0,300.0 L263.5,300.8 L263.0,301.6 L262.5,298.4 L262.0,298.4 L261.5,298.6 L261.0,299.4 L260.5,300.6 L260.0,302.1 L259.5,303.0 L259.0,298.4 L258.5,298.2 L258.0,298.4 L257.5,299.8 L257.0,300.6 L256.5,302.4 L256.0,303.5 L255.5,298.2 L255.0,298.3 L254.5,298.8 L254.0,299.6 L253.5,300.5 L253.0,301.9 L252.5,303.0 L252.0,298.1 L251.5,298.2 L251.0,298.8 L250.5,300.0 L250.0,301.1 L249.5,302.5 L249.0,303.8 L248.5,298.2 L248.0,298.4 L247.5,298.7 L247.0,299.6 L246.5,300.8 L246.0,301.9 L245.5,302.5 L245.0,298.2 L244.5,298.4 L244.0,298.4 L243.5,299.6 L243.0,300.7 L242.5,302.1 L242.0,303.4 L241.5,298.4 L241.0,298.0 L240.5,298.6 L240.0,299.0 L239.5,300.1 L239.0,300.9 L238.5,301.9 L238.0,298.2 L237.5,298.4 L237.0,298.8 L236.5,299.2 L236.0,300.6 L235.5,301.2 L235.0,302.8 L234.5,298.1 L234.0,298.2 L233.5,298.7 L233.0,299.3 L232.5,300.5 L232.0,301.6 L231.5,303.3 L231.0,298.1 L230.5,298.4 L230.0,298.9 L229.5,299.6 L229.0,301.0 L228.5,302.5 L228.0,304.0 L227.5,297.9 L227.0,297.9 L226.5,298.4 L226.0,299.5 L225.5,300.2 L225.0,301.1 L224.5,302.4 L224.0,298.1 L223.5,297.9 L223.0,298.8 L222.5,299.5 L222.0,300.6 L221.5,301.6 L221.0,303.0 L220.5,298.4 L220.0,298.0 L219.5,298.6 L219.0,299.2 L218.5,300.1 L218.0,300.6 L217.5,301.3 L217.0,297.8 L216.5,298.2 L216.0,299.0 L215.5,299.5 L215.0,301.3 L214.5,302.3 L214.0,304.1 L213.5,295.0 L213.0,295.1 L212.5,295.1 L212.0,295.1 L211.5,295.2 L211.0,295.2 L210.5,295.3 L210.0,295.3 L209.5,295.3 L209.0,295.4 L208.5,295.4 L208.0,295.5 L207.5,295.5 L207.0,295.6 L206.5,295.6 L206.0,295.6 L205.5,295.7 L205.0,295.7 L204.5,295.8 L204.0,295.8Z" fill="#3d6a0a"/>
</svg>

<!-- start marker -->
<svg style="left:0;top:0" width="730" height="480">
 <path d="M200,116 H226 L220,129 H202 V136.5 H200Z" fill="#5aaee0"/>
 <path d="M234.5,92 V464" stroke="#b9b9b9" stroke-width="1.2"/>
 <path d="M261,123 V135.5 L263.8,132.8 L265.8,137 L267.6,136.1 L265.7,132 L269.5,131.8Z" fill="#fff" stroke="#222" stroke-width="0.6"/>
 <path d="M711.8,191.5 L715.2,187 L718.6,191.5Z" fill="#8d8e92"/>
</svg>
<div class="t"  style="transform:scaleX(0.919);transform-origin:0 0;left:201.8px;top:118.8px;font-size:8.5px;color:#1d4564">Start</div>
<div class="t"  style="transform:scaleX(1.010);transform-origin:0 0;left:207px;top:185.2px;font-size:7.5px;color:#e9efc8;letter-spacing:0.3px;color:#eef3dc">Intricate Labyrinth</div>

<!-- left footer & timeline footer -->
<div class="a" style="left:7px;top:464px;width:713px;height:13px;background:#2a2b2f"></div>
<div class="a" style="left:199.5px;top:464px;width:1px;height:13px;background:#1c1d20"></div>
<div class="t" style="left:21px;top:468.8px;font-size:8px;font-weight:bold;color:#cfcfcf">M</div>
<div class="t" style="left:59px;top:468.8px;font-size:8px;font-weight:bold;color:#cfcfcf">S</div>
<svg style="left:0;top:0" width="730" height="490">
 <path d="M96.2,468.3 A3.4,3.4 0 1 0 99.8,468.3" fill="none" stroke="#3d8fe0" stroke-width="1.4"/>
 <path d="M98,466.5 V471" stroke="#3d8fe0" stroke-width="1.4"/>
 <path d="M173,469 H178 L175.5,472.5Z" fill="#9a9a9e"/>
 <rect x="189" y="467" width="6" height="3.5" fill="#5a5b5f"/><rect x="189" y="471.3" width="6" height="3.5" fill="#5a5b5f"/>
 <path d="M210.5,466.5 L206.5,470.5 L210.5,474.5Z" fill="#a8a8ab"/>
 <rect x="218.5" y="468.5" width="15" height="4" rx="2" fill="#a8a8ab"/>
 <path d="M617.5,466.5 L621.5,470.5 L617.5,474.5Z" fill="#a8a8ab"/>
 <path d="M632,471 H697" stroke="#8a8a8e" stroke-width="1.2"/>
 <circle cx="632" cy="471" r="1.3" fill="#a8a8ab"/>
 <rect x="651" y="468" width="2.5" height="6" rx="1" fill="#b8b8bb"/>
 <circle cx="697.5" cy="471" r="2.8" fill="#a8a8ab"/>
 <path d="M711.5,457 H718.5 L715,461Z" fill="#9a9a9e"/>
 <path d="M712.5,467.5 H719 M712.5,470.2 H719" stroke="#9a9a9e" stroke-width="1.5"/>
 <path d="M708,473.8 H710.5 M708,475.8 H710.5" stroke="#9a9a9e" stroke-width="1"/>
</svg>
<div class="t"  style="transform:scaleX(0.917);transform-origin:0 0;left:137px;top:467px;font-size:8.5px;color:#9ea5b8">標準</div>

<!-- browser -->
<div class="a" style="left:725px;top:90px;width:4px;height:392px;background:#19191b"></div>
<div class="a" style="left:729px;top:92px;width:224px;height:385px;background:#3a3b3f"></div>
<div class="a" style="left:746px;top:92px;width:207px;height:22.5px;background:#232428"></div>
<div class="a" style="left:729px;top:92px;width:17px;height:27px;background:#4a4b50"></div>
<div class="a" style="left:746px;top:114.5px;width:207px;height:4.5px;background:#4a4b50"></div>
<div class="a" style="left:955.5px;top:90px;width:4.5px;height:392px;background:#27282b"></div>
<svg style="left:0;top:0" width="960" height="490">
 <path d="M733,104 L737.3,99.8 L741.6,104 H740.5 V108 H738.4 V105.5 H736.2 V108 H734.1 V104Z" fill="#f0f0f0"/>
 <circle cx="944" cy="103" r="3.3" fill="none" stroke="#d8d8d8" stroke-width="1.4"/>
 <path d="M946.3,105.3 L950,108.8" stroke="#d8d8d8" stroke-width="1.6"/>
</svg>
<div class="t"  style="transform:scaleX(0.638);transform-origin:0 0;left:751px;top:99px;font-size:9px;color:#c2c2c2;font-weight:bold">エフェクト</div>
<div class="t"  style="transform:scaleX(0.693);transform-origin:0 0;left:788.5px;top:99px;font-size:9px;color:#c2c2c2;font-weight:bold">ループ</div>
<div class="t"  style="transform:scaleX(0.639);transform-origin:0 0;left:816.6px;top:99px;font-size:9px;color:#c2c2c2;font-weight:bold">ファイル</div>
<div class="t"  style="transform:scaleX(0.667);transform-origin:0 0;left:849px;top:99px;font-size:9px;color:#c2c2c2;font-weight:bold">クラウド</div>
<div class="t"  style="transform:scaleX(0.639);transform-origin:0 0;left:882.4px;top:99px;font-size:9px;color:#c2c2c2;font-weight:bold">ショップ</div>
<div class="t"  style="transform:scaleX(0.704);transform-origin:0 0;left:914.6px;top:99px;font-size:9px;color:#c2c2c2;font-weight:bold">プール</div>
<!-- items -->
<svg style="left:0;top:0" width="960" height="490">
 <!-- piano -->
 <rect x="743" y="140.8" width="24.3" height="24.4" rx="1.5" fill="#dcdcdc"/>
 <path d="M747.5,154V165 M751.3,154V165 M755.2,154V165 M759.6,140.8V165 M763.3,154V165" stroke="#b4b4b6" stroke-width="0.7"/>
 <path d="M746.4,140.8 h2.4 v14 h-2.4Z M750.1,140.8 h2.4 v14 h-2.4Z M753.9,140.8 h2.5 v14 h-2.5Z M762,140.8 h2.4 v14 h-2.4Z" fill="#3a3b3f"/>
 <!-- FX -->
 <rect x="743.5" y="193.5" width="23.5" height="23.5" rx="1" fill="#4a4c53"/>
 <!-- loops -->
 <rect x="743.5" y="245.7" width="23.5" height="23.8" rx="1" fill="#7b8dac"/>
 <path d="M749.3,253.5 Q749.3,250.7 755.5,250.7 Q761.7,250.7 761.7,253.5 Q761.7,259.5 755.5,266 Q749.3,259.5 749.3,253.5Z" fill="#eef0f4"/>
 <path d="M756.5,253.5 L753,258.5 H755.5 L754.5,262 L758.2,256.8 H755.8Z" fill="#7a8caa"/>
 <!-- files -->
 <path d="M743,299 H751.5 L753.5,301 H767 V321.7 H743Z" fill="#4a4b50"/>
 <path d="M747.3,305.3 H751.7 L749.5,308.3Z" fill="#e0e0e0"/>
 <path d="M753,306.3 H764.7 M753,312.2 H764.7" stroke="#cfcfcf" stroke-width="1.8"/>
 <path d="M753,318.3 H764.7" stroke="#f4f4f4" stroke-width="1.8"/>
 <!-- cloud -->
 <rect x="743" y="350" width="25" height="25" fill="#55565b"/>
 <path d="M747,367.5 Q745,367.5 745.2,365 Q745.5,362.5 748,362.8 Q749,358.5 753,359 Q755.5,356 759,357.5 Q762,359 762,362 Q766,362 766.3,365 Q766.5,367.5 764,367.5Z" fill="#f2f2f2"/>
 <path d="M749,366 Q746,365.5 746.5,362.5" fill="none" stroke="#b8b8b8" stroke-width="0.8"/>
 <!-- shop -->
 <rect x="743.3" y="403.3" width="23.6" height="23.6" rx="1" fill="#7b8dac"/>
 <path d="M752,411 V409.2 H758.5 V411" fill="none" stroke="#e4e8f0" stroke-width="1"/>
 <path d="M749.8,420.5 V413.5 Q749.8,411 752.3,411 H758.2 Q760.7,411 760.7,413.5 V420.5Z" fill="none" stroke="#e4e8f0" stroke-width="1.1"/>
 <path d="M752.5,418.5 L754,414.5 M754.5,418.5 L756,414.5 M756.5,418.5 L758,414.5" stroke="#e4e8f0" stroke-width="0.8"/>
 <!-- pool -->
 <rect x="743.3" y="455.5" width="23.6" height="22" rx="1" fill="#7b8dac"/>
 <path d="M746,467 H764" stroke="#f0f0f0" stroke-width="0.9"/>
 <path d="M746,466.5 L748.5,471.5 L750.5,466.5Z M750.2,467 L752.2,460.2 L754.2,467Z M753.6,467 L755.3,473 L757,467Z M756.8,467 L758.6,460.2 L760.4,467Z M760,466.5 L762,471.5 L764.3,466.5Z" fill="#f0f0f0"/>
</svg>
<div class="t"  style="transform:scaleX(0.998);transform-origin:0 0;left:746.9px;top:199px;font-size:13px;font-weight:bold;color:#e4e4e4">FX</div>
<div class="t"  style="transform:scaleX(0.741);transform-origin:0 0;left:783px;top:139px;font-size:12px;color:#d4d4d4">インストゥルメント</div>
<div class="t"  style="transform:scaleX(0.962);transform-origin:0 0;left:783px;top:160.5px;font-size:9px;color:#d4d4d4"><span style="display:inline-block;width:64.80px;white-space:nowrap;vertical-align:top"><span style="display:inline-block;transform:scaleX(0.72);transform-origin:0 0"><b>インストゥルメントと</b></span></span>Note FX<span style="display:inline-block;width:19.44px;white-space:nowrap;vertical-align:top"><span style="display:inline-block;transform:scaleX(0.72);transform-origin:0 0"><b>を表示</b></span></span></div>
<div class="t"  style="transform:scaleX(0.708);transform-origin:0 0;left:783px;top:191.5px;font-size:12px;color:#d4d4d4">エフェクト</div>
<div class="t"  style="transform:scaleX(0.699);transform-origin:0 0;left:783px;top:212.5px;font-size:9px;color:#d4d4d4"><b>インストールされているエフェクトを表示</b></div>
<div class="t"  style="transform:scaleX(0.711);transform-origin:0 0;left:783px;top:244px;font-size:12px;color:#d4d4d4">ループ</div>
<div class="t"  style="transform:scaleX(0.938);transform-origin:0 0;left:783px;top:264.5px;font-size:9px;color:#d4d4d4">Studio One <span style="display:inline-block;width:84.24px;white-space:nowrap;vertical-align:top"><span style="display:inline-block;transform:scaleX(0.72);transform-origin:0 0"><b>ループライブラリをブラウズ</b></span></span></div>
<div class="t"  style="transform:scaleX(0.700);transform-origin:0 0;left:783px;top:296.5px;font-size:12px;color:#d4d4d4">ファイル</div>
<div class="t"  style="transform:scaleX(0.667);transform-origin:0 0;left:783px;top:317px;font-size:9px;color:#d4d4d4"><b>ファイルとフォルダーをブラウズ</b></div>
<div class="t"  style="transform:scaleX(0.700);transform-origin:0 0;left:783px;top:349px;font-size:12px;color:#d4d4d4">クラウド</div>
<div class="t"  style="transform:scaleX(0.972);transform-origin:0 0;left:783px;top:370.5px;font-size:9px;color:#d4d4d4">PreSonus Exchange<span style="display:inline-block;width:71.28px;white-space:nowrap;vertical-align:top"><span style="display:inline-block;transform:scaleX(0.72);transform-origin:0 0"><b>およびその他のサービス</b></span></span></div>
<div class="t"  style="transform:scaleX(0.673);transform-origin:0 0;left:783px;top:401.5px;font-size:12px;color:#d4d4d4">ショップ</div>
<div class="t"  style="transform:scaleX(0.968);transform-origin:0 0;left:783px;top:422.5px;font-size:9px;color:#d4d4d4">PreSonus <span style="display:inline-block;width:84.24px;white-space:nowrap;vertical-align:top"><span style="display:inline-block;transform:scaleX(0.72);transform-origin:0 0"><b>ショップからアドオンを入手</b></span></span></div>
<div class="t"  style="transform:scaleX(0.750);transform-origin:0 0;left:783px;top:454px;font-size:12px;color:#d4d4d4">プール</div>
<div class="a" style="left:783px;top:474px;width:140px;height:3px;overflow:hidden"><div class="t"  style="transform:scaleX(0.864);transform-origin:0 0;left:0;top:0.5px;font-size:9px;color:#d4d4d4"><b>ソングで使用されているファイルを表示</b></div></div>

<!-- transport -->
<div class="a" style="left:0;top:482px;width:960px;height:24px;background:#151619"></div>
<svg style="left:0;top:0" width="960" height="540">
 <path d="M0,483.5 H11.5 L16,506 H0Z" fill="#313236"/>
 <path d="M818.8,484 H960 V506 H813.3Z" fill="#38393d"/>
 <path d="M826.7,484V506 M868.5,484V506" stroke="#323337" stroke-width="1"/>
 <rect x="910.8" y="484" width="49.2" height="22" fill="#3a86d8"/>
 <rect x="28" y="489.7" width="49" height="3.3" fill="#2d2e32"/>
 <rect x="28" y="489.7" width="10" height="3.3" fill="#5ab4e6"/>
 <rect x="28" y="494.7" width="49" height="3.3" fill="#2d2e32"/>
 <g fill="#cfcfcf"><circle cx="105.80" cy="498.70" r="1.15"/><circle cx="104.80" cy="502.45" r="1.15"/><circle cx="102.05" cy="505.20" r="1.15"/><circle cx="98.30" cy="506.20" r="1.15"/><circle cx="94.55" cy="505.20" r="1.15"/><circle cx="91.80" cy="502.45" r="1.15"/><circle cx="90.80" cy="498.70" r="1.15"/><circle cx="91.80" cy="494.95" r="1.15"/><circle cx="94.55" cy="492.20" r="1.15"/><circle cx="98.30" cy="491.20" r="1.15"/><circle cx="102.05" cy="492.20" r="1.15"/><circle cx="104.80" cy="494.95" r="1.15"/></g>
 <!-- transport buttons -->
 <path d="M306,493.5 V503.5 L297.5,498.5Z" fill="#cfcfcf"/>
 <path d="M321.5,493.5 V503.5 L314,498.5Z M328.8,493.5 V503.5 L321.3,498.5Z" fill="#cfcfcf"/>
 <path d="M337.5,493.5 V503.5 L345,498.5Z M344.5,493.5 V503.5 L352,498.5Z" fill="#cfcfcf"/>
 <path d="M357.5,493.5 V503.5 L366,498.5Z" fill="#cfcfcf"/>
 <path d="M375.5,493.5 V503.5" stroke="#cfcfcf" stroke-width="1.4"/>
 <path d="M386,493.5 V503.5 L377.5,498.5Z" fill="#cfcfcf"/>
 <rect x="401" y="492" width="15.2" height="15.5" fill="#c9c9c9"/>
 <path d="M430,492 V506 L443,499Z" fill="#78ee3c"/>
 <circle cx="461.2" cy="499.2" r="7.5" fill="#d2d2d2"/>
 <path d="M490.9,500.2 L488,505.2 H486.8 Q481.2,505.2 481.2,498.6 Q481.2,492.2 487.2,492.2 H498.8 Q504.8,492.2 504.8,498.6 Q504.8,505.2 499.2,505.2 H494.4 L497.2,500.2" fill="none" stroke="#c8c8c8" stroke-width="1.4" stroke-linejoin="round"/>
 <path d="M528,490.5 H530.5 V505" fill="none" stroke="#55575c" stroke-width="1"/>
 <path d="M620,491.5 H624 L627,494.8 H632" fill="none" stroke="#c0c0c0" stroke-width="1"/>
 <path d="M620,493.8 H621.5" stroke="#c0c0c0" stroke-width="0.8"/>
 <path d="M640.5,490.5 V496.5 M640.5,493.5 H645" stroke="#9a9a9a" stroke-width="0.9"/>
 <rect x="645" y="491" width="6.5" height="4.5" fill="#d0d0d0"/>
 <path d="M622.5,503.5 L625,500.5 L627.5,503.5" fill="none" stroke="#c0c0c0" stroke-width="1.4"/>
 <path d="M642,501.5 V504.5 H649 V501.5" fill="none" stroke="#c0c0c0" stroke-width="1.2"/>
 <rect x="710.8" y="489.5" width="34" height="6.2" fill="#5ab4e6"/>
 <rect x="745.5" y="489.5" width="15" height="6.2" fill="#2a2b2f"/>
 <rect x="761.5" y="489.5" width="17" height="6.2" fill="#2a2b2f"/>
 <rect x="710.6" y="490.8" width="34" height="3.6" fill="#6ec2ee" opacity="0.5"/>
 <rect x="710.8" y="501.7" width="37" height="5" fill="#4a8fc0"/>
 <rect x="747.5" y="501.7" width="1" height="5" fill="#e0e0e0"/>
 <rect x="749" y="501.7" width="12" height="5" fill="#2a2b2f"/>
 <circle cx="770" cy="504" r="3.3" fill="#5ab4e6"/><circle cx="775" cy="504" r="3.3" fill="#5ab4e6"/>
</svg>
<div class="t"  style="transform:scaleX(0.864);transform-origin:0 0;left:117px;top:490px;font-size:10.5px;color:#e0e0e0">3:10 日</div>
<div class="t"  style="transform:scaleX(1.076);transform-origin:0 0;left:190.8px;top:488.8px;font-size:13px;font-weight:bold;color:#e4e4e4">00:00:09.520</div>
<div class="t"  style="transform:scaleX(0.748);transform-origin:0 0;left:520px;top:489px;font-size:9px;color:#5a91bd">L</div>
<div class="t"  style="transform:scaleX(0.577);transform-origin:0 0;left:520px;top:500px;font-size:9px;color:#5a91bd">R</div>
<div class="t"  style="transform:scaleX(1.015);transform-origin:0 0;left:535.6px;top:489px;font-size:9.5px;color:#dcdcdc">00:00:00.505</div>
<div class="t"  style="transform:scaleX(1.015);transform-origin:0 0;left:535.6px;top:499.7px;font-size:9.5px;color:#dcdcdc">00:02:17.557</div>
<div class="t"  style="transform:scaleX(0.890);transform-origin:0 0;left:669.4px;top:490px;font-size:10.5px;color:#e4e4e4">120.00</div>
<div class="t"  style="transform:scaleX(0.810);transform-origin:0 0;left:839.6px;top:496.5px;font-size:10px;color:#d8d8d8">編集</div>
<div class="t"  style="transform:scaleX(0.613);transform-origin:0 0;left:877.5px;top:496.5px;font-size:10px;color:#d8d8d8">ミックス</div>
<div class="t"  style="transform:scaleX(0.650);transform-origin:0 0;left:922.8px;top:496.5px;font-size:10px;color:#f0f0f0">ブラウズ</div>
<div class="t"  style="transform:scaleX(0.587);transform-origin:0 0;left:36px;top:502px;font-size:8.5px;color:#9a9a9a">パフォーマンス</div>
<div class="t"  style="transform:scaleX(0.815);transform-origin:0 0;left:117.6px;top:502px;font-size:8.5px;color:#9a9a9a">最大録音時間</div>
<div class="t"  style="transform:scaleX(1.000);transform-origin:0 0;left:237px;top:502px;font-size:8.5px;color:#9a9a9a">分秒</div>
<div class="t"  style="transform:scaleX(0.630);transform-origin:0 0;left:673px;top:501.5px;font-size:8.5px;color:#9a9a9a">テンポ</div>
<!-- bottom black -->
<div class="a" style="left:0;top:506px;width:960px;height:34px;background:#000"></div>
</body></html>
